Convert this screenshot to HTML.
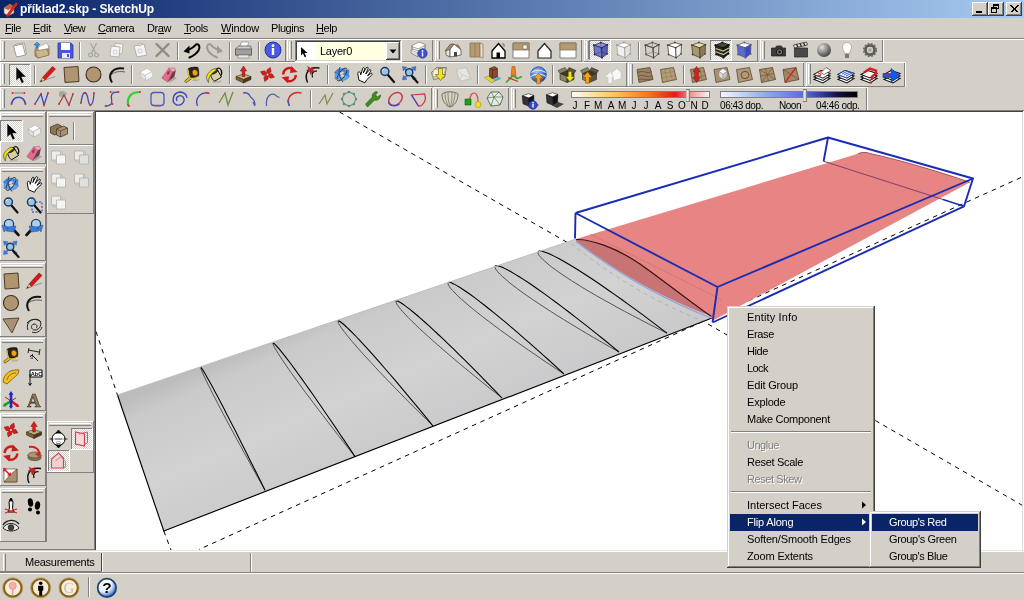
<!DOCTYPE html>
<html><head><meta charset="utf-8"><title>příklad2.skp - SketchUp</title>
<style>
html,body{margin:0;padding:0;background:#D4D0C8;}
#app{position:relative;width:1024px;height:600px;overflow:hidden;background:#D4D0C8;font-family:"Liberation Sans",sans-serif;font-size:11px;}
#app div{position:absolute;}
#app .t{position:absolute;white-space:nowrap;line-height:13px;will-change:transform;}
#app svg{position:absolute;left:0;top:0;}
u{text-decoration:underline;}
</style></head><body><div id="app">
<div style="left:0px;top:0px;width:1024px;height:18px;background:linear-gradient(90deg,#0A246A,#A6CAF0)"></div>
<span class="t" style="left:19.5px;top:3px;font-size:12px;letter-spacing:-0.087px;color:#fff;font-weight:bold;line-height:12px;">příklad2.skp - SketchUp</span>
<div style="left:972px;top:2px;width:16px;height:14px;background:#D4D0C8"></div>
<div style="left:972px;top:2px;width:15px;height:1px;background:#fff"></div>
<div style="left:972px;top:2px;width:1px;height:13px;background:#fff"></div>
<div style="left:972px;top:15px;width:16px;height:1px;background:#404040"></div>
<div style="left:987px;top:2px;width:1px;height:14px;background:#404040"></div>
<div style="left:973px;top:14px;width:14px;height:1px;background:#808080"></div>
<div style="left:986px;top:3px;width:1px;height:12px;background:#808080"></div>
<div style="left:988px;top:2px;width:16px;height:14px;background:#D4D0C8"></div>
<div style="left:988px;top:2px;width:15px;height:1px;background:#fff"></div>
<div style="left:988px;top:2px;width:1px;height:13px;background:#fff"></div>
<div style="left:988px;top:15px;width:16px;height:1px;background:#404040"></div>
<div style="left:1003px;top:2px;width:1px;height:14px;background:#404040"></div>
<div style="left:989px;top:14px;width:14px;height:1px;background:#808080"></div>
<div style="left:1002px;top:3px;width:1px;height:12px;background:#808080"></div>
<div style="left:1006px;top:2px;width:16px;height:14px;background:#D4D0C8"></div>
<div style="left:1006px;top:2px;width:15px;height:1px;background:#fff"></div>
<div style="left:1006px;top:2px;width:1px;height:13px;background:#fff"></div>
<div style="left:1006px;top:15px;width:16px;height:1px;background:#404040"></div>
<div style="left:1021px;top:2px;width:1px;height:14px;background:#404040"></div>
<div style="left:1007px;top:14px;width:14px;height:1px;background:#808080"></div>
<div style="left:1020px;top:3px;width:1px;height:12px;background:#808080"></div>
<div style="left:976px;top:11px;width:6px;height:2px;background:#000"></div>
<div style="left:993px;top:4px;width:6px;height:5px;box-sizing:border-box;border:1px solid #000;border-top:2px solid #000"></div>
<div style="left:991px;top:7px;width:6px;height:6px;box-sizing:border-box;border:1px solid #000;border-top:2px solid #000;background:#D4D0C8"></div>
<span class="t" style="left:5px;top:22px;font-size:11px;letter-spacing:-0.430px;color:#000;">File</span>
<div style="left:5px;top:33px;width:7px;height:1px;background:#000"></div>
<span class="t" style="left:33px;top:22px;font-size:11px;letter-spacing:-0.242px;color:#000;">Edit</span>
<div style="left:33px;top:33px;width:7px;height:1px;background:#000"></div>
<span class="t" style="left:64px;top:22px;font-size:11px;letter-spacing:-0.660px;color:#000;">View</span>
<div style="left:64px;top:33px;width:7px;height:1px;background:#000"></div>
<span class="t" style="left:98px;top:22px;font-size:11px;letter-spacing:-0.521px;color:#000;">Camera</span>
<div style="left:98px;top:33px;width:8px;height:1px;background:#000"></div>
<span class="t" style="left:147px;top:22px;font-size:11px;letter-spacing:-0.414px;color:#000;">Draw</span>
<div style="left:158px;top:33px;width:6px;height:1px;background:#000"></div>
<span class="t" style="left:184px;top:22px;font-size:11px;letter-spacing:-0.338px;color:#000;">Tools</span>
<div style="left:184px;top:33px;width:7px;height:1px;background:#000"></div>
<span class="t" style="left:221px;top:22px;font-size:11px;letter-spacing:-0.188px;color:#000;">Window</span>
<div style="left:221px;top:33px;width:10px;height:1px;background:#000"></div>
<span class="t" style="left:271px;top:22px;font-size:11px;letter-spacing:-0.442px;color:#000;">Plugins</span>
<span class="t" style="left:316px;top:22px;font-size:11px;letter-spacing:-0.406px;color:#000;">Help</span>
<div style="left:316px;top:33px;width:8px;height:1px;background:#000"></div>
<div style="left:0px;top:38px;width:1024px;height:1px;background:#808080"></div>
<div style="left:0px;top:39px;width:1024px;height:1px;background:#fff"></div>
<div style="left:0px;top:110px;width:1024px;height:1px;background:#808080"></div>
<div style="left:0px;top:39px;width:286px;height:1px;background:#fff"></div>
<div style="left:0px;top:39px;width:1px;height:23px;background:#fff"></div>
<div style="left:0px;top:61px;width:287px;height:1px;background:#808080"></div>
<div style="left:285px;top:40px;width:1px;height:22px;background:#808080"></div>
<div style="left:2px;top:41px;width:1px;height:18px;background:#fff"></div>
<div style="left:3px;top:41px;width:1px;height:18px;background:#D4D0C8"></div>
<div style="left:4px;top:41px;width:1px;height:18px;background:#808080"></div>
<div style="left:287px;top:39px;width:146px;height:1px;background:#fff"></div>
<div style="left:287px;top:39px;width:1px;height:23px;background:#fff"></div>
<div style="left:287px;top:61px;width:147px;height:1px;background:#808080"></div>
<div style="left:432px;top:40px;width:1px;height:22px;background:#808080"></div>
<div style="left:289px;top:41px;width:1px;height:18px;background:#fff"></div>
<div style="left:290px;top:41px;width:1px;height:18px;background:#D4D0C8"></div>
<div style="left:291px;top:41px;width:1px;height:18px;background:#808080"></div>
<div style="left:435px;top:39px;width:147px;height:1px;background:#fff"></div>
<div style="left:435px;top:39px;width:1px;height:23px;background:#fff"></div>
<div style="left:435px;top:61px;width:148px;height:1px;background:#808080"></div>
<div style="left:581px;top:40px;width:1px;height:22px;background:#808080"></div>
<div style="left:437px;top:41px;width:1px;height:18px;background:#fff"></div>
<div style="left:438px;top:41px;width:1px;height:18px;background:#D4D0C8"></div>
<div style="left:439px;top:41px;width:1px;height:18px;background:#808080"></div>
<div style="left:584px;top:39px;width:174px;height:1px;background:#fff"></div>
<div style="left:584px;top:39px;width:1px;height:23px;background:#fff"></div>
<div style="left:584px;top:61px;width:175px;height:1px;background:#808080"></div>
<div style="left:757px;top:40px;width:1px;height:22px;background:#808080"></div>
<div style="left:586px;top:41px;width:1px;height:18px;background:#fff"></div>
<div style="left:587px;top:41px;width:1px;height:18px;background:#D4D0C8"></div>
<div style="left:588px;top:41px;width:1px;height:18px;background:#808080"></div>
<div style="left:760px;top:39px;width:123px;height:1px;background:#fff"></div>
<div style="left:760px;top:39px;width:1px;height:23px;background:#fff"></div>
<div style="left:760px;top:61px;width:124px;height:1px;background:#808080"></div>
<div style="left:882px;top:40px;width:1px;height:22px;background:#808080"></div>
<div style="left:762px;top:41px;width:1px;height:18px;background:#fff"></div>
<div style="left:763px;top:41px;width:1px;height:18px;background:#D4D0C8"></div>
<div style="left:764px;top:41px;width:1px;height:18px;background:#808080"></div>
<div style="left:0px;top:62px;width:627px;height:1px;background:#fff"></div>
<div style="left:0px;top:62px;width:1px;height:25px;background:#fff"></div>
<div style="left:0px;top:86px;width:628px;height:1px;background:#808080"></div>
<div style="left:626px;top:63px;width:1px;height:24px;background:#808080"></div>
<div style="left:2px;top:64px;width:1px;height:20px;background:#fff"></div>
<div style="left:3px;top:64px;width:1px;height:20px;background:#D4D0C8"></div>
<div style="left:4px;top:64px;width:1px;height:20px;background:#808080"></div>
<div style="left:628px;top:62px;width:176px;height:1px;background:#fff"></div>
<div style="left:628px;top:62px;width:1px;height:25px;background:#fff"></div>
<div style="left:628px;top:86px;width:177px;height:1px;background:#808080"></div>
<div style="left:803px;top:63px;width:1px;height:24px;background:#808080"></div>
<div style="left:630px;top:64px;width:1px;height:20px;background:#fff"></div>
<div style="left:631px;top:64px;width:1px;height:20px;background:#D4D0C8"></div>
<div style="left:632px;top:64px;width:1px;height:20px;background:#808080"></div>
<div style="left:806px;top:62px;width:99px;height:1px;background:#fff"></div>
<div style="left:806px;top:62px;width:1px;height:25px;background:#fff"></div>
<div style="left:806px;top:86px;width:100px;height:1px;background:#808080"></div>
<div style="left:904px;top:63px;width:1px;height:24px;background:#808080"></div>
<div style="left:808px;top:64px;width:1px;height:20px;background:#fff"></div>
<div style="left:809px;top:64px;width:1px;height:20px;background:#D4D0C8"></div>
<div style="left:810px;top:64px;width:1px;height:20px;background:#808080"></div>
<div style="left:0px;top:87px;width:432px;height:1px;background:#fff"></div>
<div style="left:0px;top:87px;width:1px;height:24px;background:#fff"></div>
<div style="left:0px;top:110px;width:433px;height:1px;background:#808080"></div>
<div style="left:431px;top:88px;width:1px;height:23px;background:#808080"></div>
<div style="left:2px;top:89px;width:1px;height:19px;background:#fff"></div>
<div style="left:3px;top:89px;width:1px;height:19px;background:#D4D0C8"></div>
<div style="left:4px;top:89px;width:1px;height:19px;background:#808080"></div>
<div style="left:433px;top:87px;width:76px;height:1px;background:#fff"></div>
<div style="left:433px;top:87px;width:1px;height:24px;background:#fff"></div>
<div style="left:433px;top:110px;width:77px;height:1px;background:#808080"></div>
<div style="left:508px;top:88px;width:1px;height:23px;background:#808080"></div>
<div style="left:435px;top:89px;width:1px;height:19px;background:#fff"></div>
<div style="left:436px;top:89px;width:1px;height:19px;background:#D4D0C8"></div>
<div style="left:437px;top:89px;width:1px;height:19px;background:#808080"></div>
<div style="left:511px;top:87px;width:356px;height:1px;background:#fff"></div>
<div style="left:511px;top:87px;width:1px;height:24px;background:#fff"></div>
<div style="left:511px;top:110px;width:357px;height:1px;background:#808080"></div>
<div style="left:866px;top:88px;width:1px;height:23px;background:#808080"></div>
<div style="left:513px;top:89px;width:1px;height:19px;background:#fff"></div>
<div style="left:514px;top:89px;width:1px;height:19px;background:#D4D0C8"></div>
<div style="left:515px;top:89px;width:1px;height:19px;background:#808080"></div>
<div style="left:883px;top:39px;width:1px;height:23px;background:#fff"></div>
<div style="left:905px;top:62px;width:1px;height:25px;background:#fff"></div>
<div style="left:867px;top:87px;width:1px;height:23px;background:#fff"></div>
<div style="left:883px;top:62px;width:22px;height:1px;background:#fff"></div>
<div style="left:0px;top:110px;width:1024px;height:1px;background:#808080"></div>
<div style="left:79px;top:42px;width:1px;height:18px;background:#808080"></div>
<div style="left:80px;top:42px;width:1px;height:18px;background:#fff"></div>
<div style="left:177px;top:42px;width:1px;height:18px;background:#808080"></div>
<div style="left:178px;top:42px;width:1px;height:18px;background:#fff"></div>
<div style="left:229px;top:42px;width:1px;height:18px;background:#808080"></div>
<div style="left:230px;top:42px;width:1px;height:18px;background:#fff"></div>
<div style="left:258px;top:42px;width:1px;height:18px;background:#808080"></div>
<div style="left:259px;top:42px;width:1px;height:18px;background:#fff"></div>
<div style="left:638px;top:42px;width:1px;height:18px;background:#808080"></div>
<div style="left:639px;top:42px;width:1px;height:18px;background:#fff"></div>
<div style="left:34px;top:65px;width:1px;height:19px;background:#808080"></div>
<div style="left:35px;top:65px;width:1px;height:19px;background:#fff"></div>
<div style="left:131px;top:65px;width:1px;height:19px;background:#808080"></div>
<div style="left:132px;top:65px;width:1px;height:19px;background:#fff"></div>
<div style="left:229px;top:65px;width:1px;height:19px;background:#808080"></div>
<div style="left:230px;top:65px;width:1px;height:19px;background:#fff"></div>
<div style="left:327px;top:65px;width:1px;height:19px;background:#808080"></div>
<div style="left:328px;top:65px;width:1px;height:19px;background:#fff"></div>
<div style="left:425px;top:65px;width:1px;height:19px;background:#808080"></div>
<div style="left:426px;top:65px;width:1px;height:19px;background:#fff"></div>
<div style="left:477px;top:65px;width:1px;height:19px;background:#808080"></div>
<div style="left:478px;top:65px;width:1px;height:19px;background:#fff"></div>
<div style="left:552px;top:65px;width:1px;height:19px;background:#808080"></div>
<div style="left:553px;top:65px;width:1px;height:19px;background:#fff"></div>
<div style="left:683px;top:65px;width:1px;height:19px;background:#808080"></div>
<div style="left:684px;top:65px;width:1px;height:19px;background:#fff"></div>
<div style="left:310px;top:90px;width:1px;height:18px;background:#808080"></div>
<div style="left:311px;top:90px;width:1px;height:18px;background:#fff"></div>
<div style="left:9px;top:64px;width:22px;height:22px;background-color:#D4D0C8;background-image:linear-gradient(45deg,#fff 25%,transparent 25%,transparent 75%,#fff 75%),linear-gradient(45deg,#fff 25%,transparent 25%,transparent 75%,#fff 75%);background-size:2px 2px;background-position:0 0,1px 1px"></div>
<div style="left:9px;top:64px;width:22px;height:1px;background:#808080"></div>
<div style="left:9px;top:64px;width:1px;height:22px;background:#808080"></div>
<div style="left:9px;top:85px;width:22px;height:1px;background:#fff"></div>
<div style="left:30px;top:64px;width:1px;height:22px;background:#fff"></div>
<div style="left:589px;top:40px;width:22px;height:21px;background-color:#D4D0C8;background-image:linear-gradient(45deg,#fff 25%,transparent 25%,transparent 75%,#fff 75%),linear-gradient(45deg,#fff 25%,transparent 25%,transparent 75%,#fff 75%);background-size:2px 2px;background-position:0 0,1px 1px"></div>
<div style="left:589px;top:40px;width:22px;height:1px;background:#808080"></div>
<div style="left:589px;top:40px;width:1px;height:21px;background:#808080"></div>
<div style="left:589px;top:60px;width:22px;height:1px;background:#fff"></div>
<div style="left:610px;top:40px;width:1px;height:21px;background:#fff"></div>
<div style="left:710px;top:40px;width:22px;height:21px;background-color:#D4D0C8;background-image:linear-gradient(45deg,#fff 25%,transparent 25%,transparent 75%,#fff 75%),linear-gradient(45deg,#fff 25%,transparent 25%,transparent 75%,#fff 75%);background-size:2px 2px;background-position:0 0,1px 1px"></div>
<div style="left:710px;top:40px;width:22px;height:1px;background:#808080"></div>
<div style="left:710px;top:40px;width:1px;height:21px;background:#808080"></div>
<div style="left:710px;top:60px;width:22px;height:1px;background:#fff"></div>
<div style="left:731px;top:40px;width:1px;height:21px;background:#fff"></div>
<div style="left:295px;top:40px;width:107px;height:22px;background:#fff"></div>
<div style="left:295px;top:40px;width:107px;height:1px;background:#808080"></div>
<div style="left:295px;top:40px;width:1px;height:22px;background:#808080"></div>
<div style="left:295px;top:61px;width:107px;height:1px;background:#fff"></div>
<div style="left:401px;top:40px;width:1px;height:22px;background:#fff"></div>
<div style="left:296px;top:41px;width:105px;height:1px;background:#404040"></div>
<div style="left:296px;top:41px;width:1px;height:20px;background:#404040"></div>
<div style="left:296px;top:60px;width:105px;height:1px;background:#D4D0C8"></div>
<div style="left:400px;top:41px;width:1px;height:20px;background:#D4D0C8"></div>
<div style="left:316px;top:42px;width:70px;height:18px;background:#FFFFE1"></div>
<span class="t" style="left:319.5px;top:45px;font-size:11px;letter-spacing:-0.276px;color:#000;">Layer0</span>
<div style="left:386px;top:42px;width:14px;height:18px;background:#D4D0C8"></div>
<div style="left:386px;top:42px;width:13px;height:1px;background:#fff"></div>
<div style="left:386px;top:42px;width:1px;height:17px;background:#fff"></div>
<div style="left:386px;top:59px;width:14px;height:1px;background:#404040"></div>
<div style="left:399px;top:42px;width:1px;height:18px;background:#404040"></div>
<div style="left:387px;top:58px;width:12px;height:1px;background:#808080"></div>
<div style="left:398px;top:43px;width:1px;height:16px;background:#808080"></div>
<div style="left:96px;top:112px;width:926px;height:438px;background:#fff"></div>
<div style="left:95px;top:111px;width:928px;height:1px;background:#404040"></div>
<div style="left:95px;top:111px;width:1px;height:439px;background:#404040"></div>
<div style="left:1022px;top:112px;width:1px;height:438px;background:#E0DED8"></div>
<div style="left:1023px;top:111px;width:1px;height:440px;background:#fff"></div>
<div style="left:96px;top:550px;width:928px;height:1px;background:#E8E6E0"></div>
<div style="left:46px;top:111px;width:1px;height:431px;background:#808080"></div>
<div style="left:0px;top:112px;width:46px;height:1px;background:#fff"></div>
<div style="left:0px;top:112px;width:1px;height:52px;background:#fff"></div>
<div style="left:0px;top:163px;width:46px;height:1px;background:#808080"></div>
<div style="left:45px;top:112px;width:1px;height:52px;background:#808080"></div>
<div style="left:2px;top:114px;width:41px;height:1px;background:#fff"></div>
<div style="left:2px;top:115px;width:41px;height:1px;background:#D4D0C8"></div>
<div style="left:2px;top:116px;width:41px;height:1px;background:#808080"></div>
<div style="left:0px;top:167px;width:46px;height:1px;background:#fff"></div>
<div style="left:0px;top:167px;width:1px;height:94px;background:#fff"></div>
<div style="left:0px;top:260px;width:46px;height:1px;background:#808080"></div>
<div style="left:45px;top:167px;width:1px;height:94px;background:#808080"></div>
<div style="left:2px;top:169px;width:41px;height:1px;background:#fff"></div>
<div style="left:2px;top:170px;width:41px;height:1px;background:#D4D0C8"></div>
<div style="left:2px;top:171px;width:41px;height:1px;background:#808080"></div>
<div style="left:0px;top:263px;width:46px;height:1px;background:#fff"></div>
<div style="left:0px;top:263px;width:1px;height:74px;background:#fff"></div>
<div style="left:0px;top:336px;width:46px;height:1px;background:#808080"></div>
<div style="left:45px;top:263px;width:1px;height:74px;background:#808080"></div>
<div style="left:2px;top:265px;width:41px;height:1px;background:#fff"></div>
<div style="left:2px;top:266px;width:41px;height:1px;background:#D4D0C8"></div>
<div style="left:2px;top:267px;width:41px;height:1px;background:#808080"></div>
<div style="left:0px;top:338px;width:46px;height:1px;background:#fff"></div>
<div style="left:0px;top:338px;width:1px;height:73px;background:#fff"></div>
<div style="left:0px;top:410px;width:46px;height:1px;background:#808080"></div>
<div style="left:45px;top:338px;width:1px;height:73px;background:#808080"></div>
<div style="left:2px;top:340px;width:41px;height:1px;background:#fff"></div>
<div style="left:2px;top:341px;width:41px;height:1px;background:#D4D0C8"></div>
<div style="left:2px;top:342px;width:41px;height:1px;background:#808080"></div>
<div style="left:0px;top:413px;width:46px;height:1px;background:#fff"></div>
<div style="left:0px;top:413px;width:1px;height:73px;background:#fff"></div>
<div style="left:0px;top:485px;width:46px;height:1px;background:#808080"></div>
<div style="left:45px;top:413px;width:1px;height:73px;background:#808080"></div>
<div style="left:2px;top:415px;width:41px;height:1px;background:#fff"></div>
<div style="left:2px;top:416px;width:41px;height:1px;background:#D4D0C8"></div>
<div style="left:2px;top:417px;width:41px;height:1px;background:#808080"></div>
<div style="left:0px;top:488px;width:46px;height:1px;background:#fff"></div>
<div style="left:0px;top:488px;width:1px;height:54px;background:#fff"></div>
<div style="left:0px;top:541px;width:46px;height:1px;background:#808080"></div>
<div style="left:45px;top:488px;width:1px;height:54px;background:#808080"></div>
<div style="left:2px;top:490px;width:41px;height:1px;background:#fff"></div>
<div style="left:2px;top:491px;width:41px;height:1px;background:#D4D0C8"></div>
<div style="left:2px;top:492px;width:41px;height:1px;background:#808080"></div>
<div style="left:47px;top:112px;width:47px;height:1px;background:#fff"></div>
<div style="left:47px;top:112px;width:1px;height:102px;background:#fff"></div>
<div style="left:47px;top:213px;width:47px;height:1px;background:#808080"></div>
<div style="left:93px;top:112px;width:1px;height:102px;background:#808080"></div>
<div style="left:49px;top:114px;width:42px;height:1px;background:#fff"></div>
<div style="left:49px;top:115px;width:42px;height:1px;background:#D4D0C8"></div>
<div style="left:49px;top:116px;width:42px;height:1px;background:#808080"></div>
<div style="left:47px;top:421px;width:47px;height:1px;background:#fff"></div>
<div style="left:47px;top:421px;width:1px;height:52px;background:#fff"></div>
<div style="left:47px;top:472px;width:47px;height:1px;background:#808080"></div>
<div style="left:93px;top:421px;width:1px;height:52px;background:#808080"></div>
<div style="left:49px;top:423px;width:42px;height:1px;background:#fff"></div>
<div style="left:49px;top:424px;width:42px;height:1px;background:#D4D0C8"></div>
<div style="left:49px;top:425px;width:42px;height:1px;background:#808080"></div>
<div style="left:94px;top:111px;width:1px;height:439px;background:#808080"></div>
<div style="left:0px;top:549px;width:95px;height:1px;background:#808080"></div>
<div style="left:73px;top:122px;width:1px;height:18px;background:#808080"></div>
<div style="left:74px;top:122px;width:1px;height:18px;background:#fff"></div>
<div style="left:49px;top:144px;width:44px;height:1px;background:#808080"></div>
<div style="left:49px;top:145px;width:44px;height:1px;background:#fff"></div>
<div style="left:0px;top:120px;width:23px;height:22px;background-color:#D4D0C8;background-image:linear-gradient(45deg,#fff 25%,transparent 25%,transparent 75%,#fff 75%),linear-gradient(45deg,#fff 25%,transparent 25%,transparent 75%,#fff 75%);background-size:2px 2px;background-position:0 0,1px 1px"></div>
<div style="left:0px;top:120px;width:23px;height:1px;background:#808080"></div>
<div style="left:0px;top:120px;width:1px;height:22px;background:#808080"></div>
<div style="left:0px;top:141px;width:23px;height:1px;background:#fff"></div>
<div style="left:22px;top:120px;width:1px;height:22px;background:#fff"></div>
<div style="left:71px;top:428px;width:22px;height:22px;background-color:#D4D0C8;background-image:linear-gradient(45deg,#fff 25%,transparent 25%,transparent 75%,#fff 75%),linear-gradient(45deg,#fff 25%,transparent 25%,transparent 75%,#fff 75%);background-size:2px 2px;background-position:0 0,1px 1px"></div>
<div style="left:71px;top:428px;width:22px;height:1px;background:#808080"></div>
<div style="left:71px;top:428px;width:1px;height:22px;background:#808080"></div>
<div style="left:71px;top:449px;width:22px;height:1px;background:#fff"></div>
<div style="left:92px;top:428px;width:1px;height:22px;background:#fff"></div>
<div style="left:48px;top:450px;width:22px;height:22px;background-color:#D4D0C8;background-image:linear-gradient(45deg,#fff 25%,transparent 25%,transparent 75%,#fff 75%),linear-gradient(45deg,#fff 25%,transparent 25%,transparent 75%,#fff 75%);background-size:2px 2px;background-position:0 0,1px 1px"></div>
<div style="left:48px;top:450px;width:22px;height:1px;background:#808080"></div>
<div style="left:48px;top:450px;width:1px;height:22px;background:#808080"></div>
<div style="left:48px;top:471px;width:22px;height:1px;background:#fff"></div>
<div style="left:69px;top:450px;width:1px;height:22px;background:#fff"></div>
<div style="left:0px;top:551px;width:1024px;height:1px;background:#fff"></div>
<div style="left:3px;top:554px;width:1px;height:17px;background:#fff"></div>
<div style="left:4px;top:554px;width:1px;height:17px;background:#D4D0C8"></div>
<div style="left:5px;top:554px;width:1px;height:17px;background:#808080"></div>
<div style="left:101px;top:553px;width:1px;height:19px;background:#404040"></div>
<div style="left:0px;top:571px;width:102px;height:1px;background:#808080"></div>
<span class="t" style="left:25px;top:556px;font-size:11px;letter-spacing:-0.273px;color:#000;">Measurements</span>
<div style="left:102px;top:553px;width:1px;height:19px;background:#fff"></div>
<div style="left:250px;top:553px;width:1px;height:19px;background:#808080"></div>
<div style="left:251px;top:553px;width:1px;height:19px;background:#fff"></div>
<div style="left:0px;top:572px;width:1024px;height:1px;background:#808080"></div>
<div style="left:0px;top:573px;width:1024px;height:1px;background:#fff"></div>
<div style="left:88px;top:577px;width:1px;height:20px;background:#808080"></div>
<div style="left:89px;top:577px;width:1px;height:20px;background:#fff"></div>
<span class="t" style="left:571px;top:100px;font-size:10px;width:8px;text-align:center;line-height:11px">J</span>
<span class="t" style="left:583px;top:100px;font-size:10px;width:8px;text-align:center;line-height:11px">F</span>
<span class="t" style="left:594px;top:100px;font-size:10px;width:8px;text-align:center;line-height:11px">M</span>
<span class="t" style="left:607px;top:100px;font-size:10px;width:8px;text-align:center;line-height:11px">A</span>
<span class="t" style="left:618px;top:100px;font-size:10px;width:8px;text-align:center;line-height:11px">M</span>
<span class="t" style="left:630px;top:100px;font-size:10px;width:8px;text-align:center;line-height:11px">J</span>
<span class="t" style="left:642px;top:100px;font-size:10px;width:8px;text-align:center;line-height:11px">J</span>
<span class="t" style="left:654px;top:100px;font-size:10px;width:8px;text-align:center;line-height:11px">A</span>
<span class="t" style="left:666px;top:100px;font-size:10px;width:8px;text-align:center;line-height:11px">S</span>
<span class="t" style="left:678px;top:100px;font-size:10px;width:8px;text-align:center;line-height:11px">O</span>
<span class="t" style="left:690px;top:100px;font-size:10px;width:8px;text-align:center;line-height:11px">N</span>
<span class="t" style="left:701px;top:100px;font-size:10px;width:8px;text-align:center;line-height:11px">D</span>
<span class="t" style="left:719.5px;top:100px;font-size:10px;letter-spacing:-0.428px;color:#000;line-height:11px">06:43 dop.</span>
<span class="t" style="left:779px;top:100px;font-size:10px;letter-spacing:-0.477px;color:#000;line-height:11px">Noon</span>
<span class="t" style="left:815.5px;top:100px;font-size:10px;letter-spacing:-0.378px;color:#000;line-height:11px">04:46 odp.</span>
<svg width="1024" height="600" viewBox="0 0 1024 600">
<defs><clipPath id="vp"><rect x="96" y="112" width="926" height="438"/></clipPath><linearGradient id="wing" gradientUnits="userSpaceOnUse" x1="330" y1="310" x2="400" y2="470"><stop offset="0" stop-color="#BCBCBD"/><stop offset=".12" stop-color="#CACACB"/><stop offset=".5" stop-color="#D2D2D3"/><stop offset="1" stop-color="#C8C8CA"/></linearGradient></defs>
<g clip-path="url(#vp)">
<path d="M339.5 112 L580 249.7" stroke="#000" stroke-width="1" stroke-dasharray="4.6 4.6" fill="none"/>
<path d="M708 324 L1024 506.3" stroke="#000" stroke-width="1" stroke-dasharray="4.6 4.6" fill="none"/>
<path d="M1021 177.5 L199 549.5" stroke="#000" stroke-width="1" stroke-dasharray="4.6 4.6" fill="none"/>
<path d="M96 331.5 L117.5 395 M163.8 531 L171 550" stroke="#000" stroke-width="1" stroke-dasharray="4.6 4.6" fill="none"/>
<path d="M117.5 395 L576 239 L712 318 L163.8 531Z" fill="url(#wing)"/>
<path d="M571 243.5 Q633 293.5 704 321.5" stroke="#ABABAB" stroke-width=".9" stroke-dasharray="4 4" fill="none"/>
<path d="M200.8 367.5 L200.9 368.4 L201.4 370.1 L202.3 372.3 L203.5 375.0 L205.0 378.0 L206.6 381.5 L208.5 385.3 L210.5 389.4 L212.7 393.8 L215.2 398.5 L217.8 403.5 L220.5 408.8 L223.4 414.3 L226.5 420.1 L229.7 426.1 L233.1 432.3 L236.6 438.8 L240.3 445.5 L244.1 452.5 L248.0 459.6 L252.0 467.0 L256.2 474.6 L260.5 482.3 L265.0 490.3" stroke="#333" stroke-width=".8" fill="none"/>
<path d="M200.8 367.5 L201.5 368.1 L202.5 369.5 L203.8 371.6 L205.3 374.1 L206.9 377.0 L208.8 380.3 L210.9 384.0 L213.1 388.1 L215.4 392.4 L217.9 397.1 L220.5 402.1 L223.3 407.3 L226.1 412.9 L229.1 418.7 L232.2 424.8 L235.5 431.1 L238.8 437.7 L242.2 444.5 L245.8 451.6 L249.4 458.9 L253.2 466.4 L257.0 474.1 L261.0 482.1 L265.0 490.3" stroke="#000" stroke-width="1.05" fill="none" stroke-linejoin="round"/>
<path d="M273.0 343.0 L273.0 344.1 L273.7 345.7 L274.8 347.9 L276.3 350.4 L278.1 353.4 L280.2 356.6 L282.5 360.2 L285.1 364.0 L288.0 368.2 L291.0 372.5 L294.4 377.2 L297.9 382.0 L301.6 387.1 L305.5 392.5 L309.7 398.0 L314.0 403.7 L318.5 409.7 L323.2 415.8 L328.1 422.2 L333.1 428.7 L338.3 435.4 L343.7 442.3 L349.3 449.4 L355.0 456.6" stroke="#333" stroke-width=".8" fill="none"/>
<path d="M273.0 343.0 L273.9 343.4 L275.3 344.6 L276.9 346.4 L278.9 348.6 L281.0 351.2 L283.5 354.3 L286.1 357.6 L288.9 361.3 L291.9 365.3 L295.1 369.6 L298.4 374.2 L302.0 379.1 L305.6 384.2 L309.4 389.6 L313.4 395.3 L317.5 401.2 L321.7 407.3 L326.1 413.7 L330.6 420.3 L335.3 427.1 L340.0 434.2 L344.9 441.4 L349.9 448.9 L355.0 456.6" stroke="#000" stroke-width="1.05" fill="none" stroke-linejoin="round"/>
<path d="M338.0 320.8 L338.0 322.0 L338.8 323.7 L340.0 325.8 L341.7 328.3 L343.8 331.1 L346.2 334.2 L348.9 337.6 L351.9 341.2 L355.2 345.0 L358.7 349.1 L362.6 353.4 L366.7 357.9 L371.0 362.6 L375.5 367.5 L380.3 372.6 L385.4 377.9 L390.6 383.3 L396.0 388.9 L401.7 394.7 L407.5 400.7 L413.6 406.8 L419.9 413.0 L426.3 419.4 L433.0 426.0" stroke="#333" stroke-width=".8" fill="none"/>
<path d="M338.0 320.8 L339.1 321.0 L340.7 322.0 L342.6 323.5 L344.9 325.5 L347.4 327.8 L350.2 330.5 L353.3 333.6 L356.6 337.0 L360.0 340.7 L363.7 344.6 L367.6 348.9 L371.7 353.4 L375.9 358.2 L380.3 363.2 L384.9 368.5 L389.7 374.0 L394.6 379.7 L399.6 385.7 L404.8 391.9 L410.2 398.3 L415.7 404.9 L421.3 411.7 L427.1 418.7 L433.0 426.0" stroke="#000" stroke-width="1.05" fill="none" stroke-linejoin="round"/>
<path d="M396.0 301.0 L396.0 302.3 L396.8 304.1 L398.3 306.2 L400.1 308.6 L402.4 311.3 L405.1 314.2 L408.1 317.4 L411.5 320.8 L415.2 324.4 L419.1 328.2 L423.4 332.1 L428.0 336.3 L432.8 340.6 L437.9 345.1 L443.2 349.7 L448.8 354.5 L454.7 359.5 L460.7 364.6 L467.0 369.8 L473.6 375.2 L480.4 380.7 L487.3 386.4 L494.6 392.1 L502.0 398.0" stroke="#333" stroke-width=".8" fill="none"/>
<path d="M396.0 301.0 L397.3 300.9 L399.0 301.7 L401.2 303.0 L403.7 304.7 L406.5 306.8 L409.7 309.2 L413.1 312.0 L416.7 315.0 L420.6 318.4 L424.7 322.0 L429.1 325.9 L433.6 330.1 L438.3 334.5 L443.3 339.2 L448.4 344.1 L453.7 349.2 L459.1 354.6 L464.8 360.2 L470.6 365.9 L476.6 371.9 L482.7 378.1 L489.0 384.6 L495.4 391.2 L502.0 398.0" stroke="#000" stroke-width="1.05" fill="none" stroke-linejoin="round"/>
<path d="M448.0 282.5 L448.0 284.0 L448.9 285.8 L450.4 288.0 L452.5 290.4 L455.0 293.0 L457.9 295.9 L461.2 299.0 L464.9 302.2 L468.9 305.7 L473.3 309.3 L477.9 313.0 L482.9 316.9 L488.2 321.0 L493.8 325.2 L499.6 329.5 L505.8 334.0 L512.1 338.6 L518.8 343.3 L525.7 348.1 L532.9 353.1 L540.3 358.2 L547.9 363.3 L555.8 368.6 L564.0 374.0" stroke="#333" stroke-width=".8" fill="none"/>
<path d="M448.0 282.5 L449.4 282.2 L451.3 282.8 L453.7 283.9 L456.4 285.4 L459.6 287.2 L463.0 289.5 L466.7 292.0 L470.7 294.8 L475.0 297.9 L479.5 301.4 L484.2 305.0 L489.2 309.0 L494.4 313.1 L499.8 317.6 L505.4 322.2 L511.2 327.1 L517.1 332.2 L523.3 337.6 L529.7 343.1 L536.2 348.9 L542.9 354.9 L549.8 361.0 L556.8 367.4 L564.0 374.0" stroke="#000" stroke-width="1.05" fill="none" stroke-linejoin="round"/>
<path d="M495.0 266.0 L495.0 267.7 L496.0 269.5 L497.7 271.7 L499.9 274.1 L502.5 276.6 L505.7 279.4 L509.2 282.4 L513.1 285.5 L517.4 288.8 L522.1 292.2 L527.1 295.7 L532.4 299.4 L538.1 303.2 L544.0 307.1 L550.3 311.1 L556.8 315.3 L563.6 319.5 L570.8 323.9 L578.1 328.3 L585.8 332.9 L593.7 337.6 L601.9 342.3 L610.3 347.1 L619.0 352.0" stroke="#333" stroke-width=".8" fill="none"/>
<path d="M495.0 266.0 L496.5 265.5 L498.5 265.9 L501.0 266.8 L504.0 268.1 L507.3 269.8 L511.0 271.8 L514.9 274.1 L519.2 276.7 L523.8 279.6 L528.6 282.8 L533.7 286.3 L539.0 290.0 L544.5 293.9 L550.3 298.1 L556.2 302.5 L562.4 307.2 L568.8 312.0 L575.4 317.1 L582.2 322.4 L589.2 327.9 L596.4 333.6 L603.8 339.5 L611.3 345.7 L619.0 352.0" stroke="#000" stroke-width="1.05" fill="none" stroke-linejoin="round"/>
<path d="M538.0 251.5 L538.0 253.3 L539.0 255.2 L540.8 257.3 L543.1 259.7 L545.9 262.2 L549.1 265.0 L552.8 267.8 L556.9 270.8 L561.4 274.0 L566.2 277.2 L571.4 280.6 L577.0 284.1 L582.8 287.7 L589.0 291.4 L595.5 295.2 L602.4 299.1 L609.5 303.0 L616.8 307.1 L624.5 311.3 L632.5 315.5 L640.7 319.8 L649.2 324.2 L658.0 328.7 L667.0 333.2" stroke="#333" stroke-width=".8" fill="none"/>
<path d="M538.0 251.5 L539.5 250.9 L541.6 251.1 L544.2 251.9 L547.3 253.0 L550.8 254.6 L554.6 256.4 L558.7 258.5 L563.2 261.0 L567.9 263.7 L572.9 266.7 L578.2 270.0 L583.7 273.5 L589.5 277.3 L595.5 281.3 L601.7 285.5 L608.1 290.0 L614.8 294.6 L621.7 299.5 L628.7 304.6 L636.0 309.9 L643.5 315.4 L651.1 321.1 L659.0 327.1 L667.0 333.2" stroke="#000" stroke-width="1.05" fill="none" stroke-linejoin="round"/>
<path d="M117.5 395 L163.8 531 L712 318" stroke="#000" stroke-width="1.15" fill="none"/>
<path d="M117.5 395 L576 239" stroke="#BDBDBD" stroke-width="1" fill="none"/>
<path d="M576 239 L858 153.7 C862 152 866 152 870 153.5 C900 160 940 172 970 182.3 L714 320 L711 316 C700 309 668 284 640 264 C615 247 590 239 576 239Z" fill="#E78585"/>
<path d="M576 239.5 C590 239 615 247 640 264 C668 284 700 309 711.5 316.5 Q638.3 288.8 576 241Z" fill="#C97474"/>
<path d="M576 239.5 C590 239 615 247 640 264 C668 284 700 309 711.5 316.5" stroke="#3A1010" stroke-width="1.2" fill="none"/>
<path d="M576 241.5 Q638.3 289.6 711 318" stroke="#8FA0E0" stroke-width="1.2" fill="none"/>
<path d="M858 153.7 C862 152 866 152 870 153.5 C900 160 940 172 970 182.3" stroke="#A85068" stroke-width="1" fill="none"/>
<path d="M823.6 161.3 L943 199.5" stroke="#8C4468" stroke-width="1.2" fill="none"/>
<path d="M943 199.5 L964 206.3" stroke="#1A2CB4" stroke-width="1.5" fill="none"/>
<path d="M590 234 L722 300" stroke="#C86C74" stroke-width="1" fill="none" opacity=".6"/>
<path d="M575.5 213 L575 238.5 M575.5 213 L717.5 287 L712.5 322.5 M575.5 213 L828 137.5 L973 178.5 L717.5 287 M828 137.5 L823.6 161.3 M973 178.5 L964 206.3 L712.5 322.5" stroke="#1A2CB4" stroke-width="1.9" fill="none" stroke-linejoin="round"/>
<path d="M575 238.5 L712.5 322.5" stroke="#1A2CB4" stroke-width="1" fill="none" opacity=".0"/>
</g>
<path d="M1010.5 5.5 l7 7 M1011.5 5.5 l7 7 M1017.5 5.5 l-7 7 M1018.5 5.5 l-7 7" stroke="#000" stroke-width="1" fill="none" shape-rendering="crispEdges"/>
<path d="M389.5 49.5 h7 l-3.5 4z" fill="#000"/>
<path d="M301 47 v8.5 l2 -2 l1.7 3.8 l1.5 -0.7 l-1.7 -3.7 h3z" fill="#000"/>
<g transform="translate(19.5,50)" ><path d="M-4 -6 L5 -7 L7 4 L-2 6Z" fill="#E8E8E8" stroke="#9A9A9A" stroke-width="0.8" /><path d="M-6 -4 L3 -6 L6 5 L-3 7Z" fill="#fff" stroke="#8A8A8A" stroke-width="0.8" /></g>
<g transform="translate(42,51)" ><path d="M-7 -2 L-4 -4 L7 -5 L7 4 L-4 7 L-7 5Z" fill="#B49A72" stroke="#8A7250" stroke-width="0.8" /><path d="M-4 -4 L5 -8 L7 -3 L-3 1Z" fill="#fff" stroke="#999" stroke-width="0.6" /><path d="M-7 0 L5 -2 L7 4 L-4 7 Z" fill="#CDB68E" stroke="#8A7250" stroke-width="0.7" /><path d="M-8 -6 l3 -3 l3 3 l-2 0 l0 3 l-2 0 l0 -3z" fill="#3C96E0" stroke="#1C66B0" stroke-width="0.6" /></g>
<g transform="translate(65,50)" ><path d="M-7 -7 H6 L8 -5 V8 H-7Z" fill="#4858D0" stroke="#2C389C" stroke-width="0.8" /><path d="M-4 -7 H5 V0 H-4Z" fill="#fff" stroke="none" stroke-width="1" /><path d="M-3 3 H5 V8 H-3Z" fill="#E8E8F8" stroke="none" stroke-width="1" /><path d="M2 4 H4 V7 H2Z" fill="#4858D0" stroke="none" stroke-width="1" /></g>
<g transform="translate(93.5,50)" ><path d="M-3 -7 L2 3 M3 -7 L-2 3" fill="none" stroke="#A4A49C" stroke-width="1.2" /><circle cx="-3" cy="5" r="2" fill="none" stroke="#A4A49C" stroke-width="1.2"/><circle cx="3" cy="5" r="2" fill="none" stroke="#A4A49C" stroke-width="1.2"/></g>
<g transform="translate(117,50)" ><path d="M-2 -7 L6 -6 L5 4 L-3 3Z" fill="#F0F0F0" stroke="#AAA" stroke-width="0.8" /><path d="M-6 -4 L3 -3 L2 7 L-7 6Z" fill="#F6F6F6" stroke="#A4A4A4" stroke-width="0.8" /><circle cx="-2" cy="2" r="2" fill="none" stroke="#BBB" stroke-width="0.7"/></g>
<g transform="translate(140,50)" ><path d="M-6 -4 L4 -6 L7 5 L-3 7Z" fill="#F4F4F4" stroke="#A4A4A4" stroke-width="0.8" /><path d="M-2 -6 L1 -7 L2 -5 L-1 -4Z" fill="#DDD" stroke="#A4A4A4" stroke-width="0.6" /><circle cx="0" cy="1" r="2" fill="none" stroke="#BBB" stroke-width="0.7"/></g>
<g transform="translate(162.5,50)" ><path d="M-6 -6 L6 6 M6 -6 L-6 6" fill="none" stroke="#8C8C84" stroke-width="2.4" stroke-linecap="round"/></g>
<g transform="translate(192,50)" ><path d="M-5 0.5 C-1 -1 2 -3 4 -5.5 C7 -7 8.5 -3 6.5 0.5 C4.5 4 1 6 -2.5 7.5" fill="none" stroke="#000" stroke-width="2" stroke-linecap="round"/><path d="M-8.5 1.5 L-2.5 -4.5 L-2.5 3.5Z" fill="#000" stroke="none" stroke-width="1" /></g>
<g transform="translate(214.5,50)" ><g transform="scale(-1,1)"><path d="M-5 0.5 C-1 -1 2 -3 4 -5.5 C7 -7 8.5 -3 6.5 0.5 C4.5 4 1 6 -2.5 7.5" fill="none" stroke="#9A9A96" stroke-width="2" stroke-linecap="round"/><path d="M-8.5 1.5 L-2.5 -4.5 L-2.5 3.5Z" fill="#9A9A96" stroke="none" stroke-width="1" /></g></g>
<g transform="translate(243.5,50)" ><path d="M-4 -3 L-2 -8 L5 -8 L4 -3Z" fill="#fff" stroke="#888" stroke-width="0.7" /><path d="M-8 -1 L-5 -4 L7 -4 L8 -1 L8 5 L-8 5Z" fill="#CCCCCC" stroke="#606060" stroke-width="0.8" /><path d="M-8 -1 H8 V5 H-8Z" fill="#A0A0A0" stroke="#505050" stroke-width="0.7" /><path d="M-5 5 L-6 8 L6 8 L5 5Z" fill="#E8E8E8" stroke="#777" stroke-width="0.6" /></g>
<g transform="translate(273,50)" ><circle cx="0" cy="0" r="8" fill="#4A5AE0" stroke="#2030A8" stroke-width="1"/><path d="M-1.2 -2 H1.2 V5 H-1.2Z" fill="#fff" stroke="none" stroke-width="1" /><circle cx="0" cy="-4.3" r="1.4" fill="#fff" stroke="none" stroke-width="1"/></g>
<g transform="translate(419,50)" ><path d="M-8 0 L0 -4 L7 -1 L-1 3Z" fill="#fff" stroke="#777" stroke-width="0.7" /><path d="M-8 -2 L0 -6 L7 -3 L-1 1Z" fill="#fff" stroke="#777" stroke-width="0.7" /><path d="M-8 -4 L0 -8 L7 -5 L-1 -1Z" fill="#fff" stroke="#777" stroke-width="0.7" /><path d="M-8 0 L-8 3 L-1 7 L-1 3" fill="#ddd" stroke="#777" stroke-width="0.7" /><circle cx="3.5" cy="3.5" r="4.6" fill="#4050D8" stroke="#2030A0" stroke-width="0.8"/><path d="M2.8 2.5 h1.4 v4 h-1.4z" fill="#fff" stroke="none" stroke-width="1" /><circle cx="3.5" cy="1" r="0.9" fill="#fff" stroke="none" stroke-width="1"/></g>
<g transform="translate(453,50)" ><path d="M-7 0 L-2 -5 L5 -5 L8 0 Z" fill="#A48A66" stroke="#5A4A36" stroke-width="0.7" /><path d="M-7 0 L-3 -1 L-3 7 L-7 5Z" fill="#E8E8E8" stroke="#444" stroke-width="0.7" /><path d="M-3 -1 L1 -6 L8 0 L8 5 L-3 7Z" fill="#fff" stroke="#444" stroke-width="0.7" /><path d="M-8 1 L-2.5 -6 L1 -6 L-3 -0.5Z" fill="#A48A66" stroke="#5A4A36" stroke-width="0.6" /><path d="M1 2 h3 v4.5 h-3z" fill="#444" stroke="none" stroke-width="1" /></g>
<g transform="translate(476,50)" ><path d="M-6 -7 H4 V7 H-6Z" fill="#B49A72" stroke="#8A7250" stroke-width="0.8" /><path d="M4 -7 L7 -6 V8 L4 7Z" fill="#E4DCC8" stroke="#8A7250" stroke-width="0.7" /><path d="M-1 -7 V7" fill="none" stroke="#8A7250" stroke-width="0.7" /></g>
<g transform="translate(498.5,50)" ><path d="M-6.5 1 L0 -6.5 L6.5 1 L6.5 8 L-6.5 8Z" fill="#fff" stroke="#000" stroke-width="1.3" /><path d="M-2 2.5 H1.5 V8 H-2Z" fill="#000" stroke="none" stroke-width="1" /><path d="M3.5 -6 h2 v3" fill="none" stroke="#555" stroke-width="0.8" /></g>
<g transform="translate(521,50)" ><path d="M-8 -7 H8 V8 H-8Z" fill="#fff" stroke="#666" stroke-width="0.8" /><path d="M-8 -7 H8 V0 H-8Z" fill="#B49A72" stroke="#8A7250" stroke-width="0.8" /><path d="M2 -5 h4 v4 h-4z" fill="#fff" stroke="#666" stroke-width="0.6" /></g>
<g transform="translate(544.5,50)" ><path d="M-6.5 1 L0 -6.5 L6.5 1 L6.5 8 L-6.5 8Z" fill="#fff" stroke="#222" stroke-width="1.2" /></g>
<g transform="translate(568,50)" ><path d="M-8 -7 H8 V8 H-8Z" fill="#fff" stroke="#666" stroke-width="0.8" /><path d="M-8 -7 H8 V0 H-8Z" fill="#B49A72" stroke="#8A7250" stroke-width="0.8" /></g>
<g transform="translate(600.5,50)" ><path d="M0.3 -7.5 L6.9 -5.3 L1.1 -2.2 L-6.7 -4.8Z" fill="#9498DC" stroke="#282850" stroke-width="0.8" stroke-linejoin="round"/><path d="M-6.7 -4.8 L1.1 -2.2 L1.6 7.7 L-5.9 4.5Z" fill="#7078C8" stroke="#282850" stroke-width="0.8" stroke-linejoin="round"/><path d="M6.9 -5.3 L1.1 -2.2 L1.6 7.7 L6.6 3.8Z" fill="#5860B4" stroke="#282850" stroke-width="0.8" stroke-linejoin="round"/><circle cx="-6.7" cy="-4.8" r="0.9" fill="#282850" stroke="none" stroke-width="1"/><circle cx="0.3" cy="-7.5" r="0.9" fill="#282850" stroke="none" stroke-width="1"/><circle cx="6.9" cy="-5.3" r="0.9" fill="#282850" stroke="none" stroke-width="1"/><circle cx="1.1" cy="-2.2" r="0.9" fill="#282850" stroke="none" stroke-width="1"/><circle cx="-5.9" cy="4.5" r="0.9" fill="#282850" stroke="none" stroke-width="1"/><circle cx="1.6" cy="7.7" r="0.9" fill="#282850" stroke="none" stroke-width="1"/><circle cx="6.6" cy="3.8" r="0.9" fill="#282850" stroke="none" stroke-width="1"/><path d="M-5.9 4.5 L0.6 1.8 L6.6 3.8 M0.6 1.8 L0.3 -7.5" fill="none" stroke="#383870" stroke-width="0.5" /></g>
<g transform="translate(623.5,50)" ><path d="M0.3 -7.5 L6.9 -5.3 L1.1 -2.2 L-6.7 -4.8Z" fill="#fff" stroke="#999" stroke-width="0.7" stroke-linejoin="round"/><path d="M-6.7 -4.8 L1.1 -2.2 L1.6 7.7 L-5.9 4.5Z" fill="#F0F0F0" stroke="#999" stroke-width="0.7" stroke-linejoin="round"/><path d="M6.9 -5.3 L1.1 -2.2 L1.6 7.7 L6.6 3.8Z" fill="#E4E4E4" stroke="#999" stroke-width="0.7" stroke-linejoin="round"/><circle cx="-6.7" cy="-4.8" r="0.9" fill="#999" stroke="none" stroke-width="1"/><circle cx="0.3" cy="-7.5" r="0.9" fill="#999" stroke="none" stroke-width="1"/><circle cx="6.9" cy="-5.3" r="0.9" fill="#999" stroke="none" stroke-width="1"/><circle cx="1.1" cy="-2.2" r="0.9" fill="#999" stroke="none" stroke-width="1"/><circle cx="-5.9" cy="4.5" r="0.9" fill="#999" stroke="none" stroke-width="1"/><circle cx="1.6" cy="7.7" r="0.9" fill="#999" stroke="none" stroke-width="1"/><circle cx="6.6" cy="3.8" r="0.9" fill="#999" stroke="none" stroke-width="1"/></g>
<g transform="translate(652,50)" ><path d="M0.3 -7.5 L6.9 -5.3 L1.1 -2.2 L-6.7 -4.8Z" fill="none" stroke="#444" stroke-width="0.8" stroke-linejoin="round"/><path d="M-6.7 -4.8 L1.1 -2.2 L1.6 7.7 L-5.9 4.5Z" fill="none" stroke="#444" stroke-width="0.8" stroke-linejoin="round"/><path d="M6.9 -5.3 L1.1 -2.2 L1.6 7.7 L6.6 3.8Z" fill="none" stroke="#444" stroke-width="0.8" stroke-linejoin="round"/><circle cx="-6.7" cy="-4.8" r="0.9" fill="#444" stroke="none" stroke-width="1"/><circle cx="0.3" cy="-7.5" r="0.9" fill="#444" stroke="none" stroke-width="1"/><circle cx="6.9" cy="-5.3" r="0.9" fill="#444" stroke="none" stroke-width="1"/><circle cx="1.1" cy="-2.2" r="0.9" fill="#444" stroke="none" stroke-width="1"/><circle cx="-5.9" cy="4.5" r="0.9" fill="#444" stroke="none" stroke-width="1"/><circle cx="1.6" cy="7.7" r="0.9" fill="#444" stroke="none" stroke-width="1"/><circle cx="6.6" cy="3.8" r="0.9" fill="#444" stroke="none" stroke-width="1"/><path d="M-5.9 4.5 L0.6 1.8 L6.6 3.8 M0.6 1.8 L0.3 -7.5" fill="none" stroke="#777" stroke-width="0.6" /></g>
<g transform="translate(674.5,50)" ><path d="M0.3 -7.5 L6.9 -5.3 L1.1 -2.2 L-6.7 -4.8Z" fill="#fff" stroke="#444" stroke-width="0.8" stroke-linejoin="round"/><path d="M-6.7 -4.8 L1.1 -2.2 L1.6 7.7 L-5.9 4.5Z" fill="#fff" stroke="#444" stroke-width="0.8" stroke-linejoin="round"/><path d="M6.9 -5.3 L1.1 -2.2 L1.6 7.7 L6.6 3.8Z" fill="#F4F4F4" stroke="#444" stroke-width="0.8" stroke-linejoin="round"/><circle cx="-6.7" cy="-4.8" r="0.9" fill="#444" stroke="none" stroke-width="1"/><circle cx="0.3" cy="-7.5" r="0.9" fill="#444" stroke="none" stroke-width="1"/><circle cx="6.9" cy="-5.3" r="0.9" fill="#444" stroke="none" stroke-width="1"/><circle cx="1.1" cy="-2.2" r="0.9" fill="#444" stroke="none" stroke-width="1"/><circle cx="-5.9" cy="4.5" r="0.9" fill="#444" stroke="none" stroke-width="1"/><circle cx="1.6" cy="7.7" r="0.9" fill="#444" stroke="none" stroke-width="1"/><circle cx="6.6" cy="3.8" r="0.9" fill="#444" stroke="none" stroke-width="1"/></g>
<g transform="translate(698.5,50)" ><path d="M0.3 -7.5 L6.9 -5.3 L1.1 -2.2 L-6.7 -4.8Z" fill="#E8DCB0" stroke="#504430" stroke-width="0.8" stroke-linejoin="round"/><path d="M-6.7 -4.8 L1.1 -2.2 L1.6 7.7 L-5.9 4.5Z" fill="#A89670" stroke="#504430" stroke-width="0.8" stroke-linejoin="round"/><path d="M6.9 -5.3 L1.1 -2.2 L1.6 7.7 L6.6 3.8Z" fill="#8C7A58" stroke="#504430" stroke-width="0.8" stroke-linejoin="round"/><circle cx="-6.7" cy="-4.8" r="0.9" fill="#504430" stroke="none" stroke-width="1"/><circle cx="0.3" cy="-7.5" r="0.9" fill="#504430" stroke="none" stroke-width="1"/><circle cx="6.9" cy="-5.3" r="0.9" fill="#504430" stroke="none" stroke-width="1"/><circle cx="1.1" cy="-2.2" r="0.9" fill="#504430" stroke="none" stroke-width="1"/><circle cx="-5.9" cy="4.5" r="0.9" fill="#504430" stroke="none" stroke-width="1"/><circle cx="1.6" cy="7.7" r="0.9" fill="#504430" stroke="none" stroke-width="1"/><circle cx="6.6" cy="3.8" r="0.9" fill="#504430" stroke="none" stroke-width="1"/></g>
<g transform="translate(722,50)" ><path d="M0.3 -7.5 L6.9 -5.3 L1.1 -2.2 L-6.7 -4.8Z" fill="#4A4A3C" stroke="#101008" stroke-width="0.8" stroke-linejoin="round"/><path d="M-6.7 -4.8 L1.1 -2.2 L1.6 7.7 L-5.9 4.5Z" fill="#2A2A22" stroke="#101008" stroke-width="0.8" stroke-linejoin="round"/><path d="M6.9 -5.3 L1.1 -2.2 L1.6 7.7 L6.6 3.8Z" fill="#1A1A14" stroke="#101008" stroke-width="0.8" stroke-linejoin="round"/><circle cx="-6.7" cy="-4.8" r="0.9" fill="#101008" stroke="none" stroke-width="1"/><circle cx="0.3" cy="-7.5" r="0.9" fill="#101008" stroke="none" stroke-width="1"/><circle cx="6.9" cy="-5.3" r="0.9" fill="#101008" stroke="none" stroke-width="1"/><circle cx="1.1" cy="-2.2" r="0.9" fill="#101008" stroke="none" stroke-width="1"/><circle cx="-5.9" cy="4.5" r="0.9" fill="#101008" stroke="none" stroke-width="1"/><circle cx="1.6" cy="7.7" r="0.9" fill="#101008" stroke="none" stroke-width="1"/><circle cx="6.6" cy="3.8" r="0.9" fill="#101008" stroke="none" stroke-width="1"/><path d="M-6.4 -1.5 L1.2 1 L6.8 -2 M-6.1 1.8 L1.4 4.6 L6.7 1.2" fill="none" stroke="#C8C0A0" stroke-width="1.2" /></g>
<g transform="translate(744,50)" ><path d="M0.3 -7.5 L6.9 -5.3 L1.1 -2.2 L-6.7 -4.8Z" fill="#fff" stroke="#505890" stroke-width="0.8" stroke-linejoin="round"/><path d="M-6.7 -4.8 L1.1 -2.2 L1.6 7.7 L-5.9 4.5Z" fill="#5A6AD0" stroke="#505890" stroke-width="0.8" stroke-linejoin="round"/><path d="M6.9 -5.3 L1.1 -2.2 L1.6 7.7 L6.6 3.8Z" fill="#3C4CB8" stroke="#505890" stroke-width="0.8" stroke-linejoin="round"/><circle cx="-6.7" cy="-4.8" r="0.9" fill="#505890" stroke="none" stroke-width="1"/><circle cx="0.3" cy="-7.5" r="0.9" fill="#505890" stroke="none" stroke-width="1"/><circle cx="6.9" cy="-5.3" r="0.9" fill="#505890" stroke="none" stroke-width="1"/><circle cx="1.1" cy="-2.2" r="0.9" fill="#505890" stroke="none" stroke-width="1"/><circle cx="-5.9" cy="4.5" r="0.9" fill="#505890" stroke="none" stroke-width="1"/><circle cx="1.6" cy="7.7" r="0.9" fill="#505890" stroke="none" stroke-width="1"/><circle cx="6.6" cy="3.8" r="0.9" fill="#505890" stroke="none" stroke-width="1"/></g>
<g transform="translate(778.5,51)" ><path d="M-7 -3 H-3 L-2 -5 H3 L4 -3 H7 V5 H-7Z" fill="#3C3C3C" stroke="#1A1A1A" stroke-width="0.7" /><circle cx="1" cy="1" r="3.2" fill="#777" stroke="#111" stroke-width="0.9"/><circle cx="1" cy="1" r="1.4" fill="#222" stroke="none" stroke-width="1"/></g>
<g transform="translate(800.5,50)" ><path d="M-6 -2 H7 V7 H-6Z" fill="#4A4A4A" stroke="#222" stroke-width="0.7" /><path d="M-7 -5 L6 -8 L7 -5 L-6 -2Z" fill="#E0E0E0" stroke="#222" stroke-width="0.7" /><path d="M-4 -5.7 l1.5 3 M-0.5 -6.5 l1.5 3 M3 -7.3 l1.5 3" fill="none" stroke="#222" stroke-width="1.3" /></g>
<defs><radialGradient id="sph" cx="35%" cy="30%" r="70%"><stop offset="0" stop-color="#E0E0E0"/><stop offset="1" stop-color="#484848"/></radialGradient></defs>
<g transform="translate(824,50)" ><circle cx="0" cy="0" r="7" fill="url(#sph)" stroke="none" stroke-width="1"/></g>
<g transform="translate(847,50)" ><path d="M-4.5 -3 A4.5 4.5 0 1 1 4.5 -3 C4.5 0 2.5 1 2.5 3.5 H-2.5 C-2.5 1 -4.5 0 -4.5 -3Z" fill="#fff" stroke="#999" stroke-width="0.7" /><path d="M-2 4 H2 V8 H-2Z" fill="#777" stroke="none" stroke-width="1" /></g>
<g transform="translate(870,50)" ><circle cx="0" cy="0" r="4.6" fill="none" stroke="#5C5C58" stroke-width="2.8"/><circle cx="0" cy="0" r="6.3" fill="none" stroke="#6C6C68" stroke-width="1.6" stroke-dasharray="2 1.3"/><circle cx="0" cy="0" r="1.8" fill="#A8A8A0" stroke="none" stroke-width="1"/></g>
<g transform="translate(20,74.5)" ><path d="M-4 -8 V6.5 L-0.8 3.6 L1.6 9 L4.2 7.8 L1.8 2.6 H6.5Z" fill="#000" stroke="#fff" stroke-width="0.6" /></g>
<g transform="translate(47.5,74.5)" ><path d="M-7 7 L8 2" fill="none" stroke="#9A9A94" stroke-width="1.2" /><path d="M-5 3 L5 -8 L8 -5.5 L-2.5 5.5Z" fill="#D81818" stroke="#8A1010" stroke-width="0.6" /><path d="M-5 3 L-2.5 5.5 L-7.5 7.5Z" fill="#E8C890" stroke="#5A4020" stroke-width="0.5" /><path d="M-7.5 7.5 l1.3 -2 l1 1z" fill="#222" stroke="none" stroke-width="1" /></g>
<g transform="translate(71,74.5)" ><path d="M-7 -7 L7 -8 L8 7 L-6 8Z" fill="#B09670" stroke="#4A3C28" stroke-width="1" /></g>
<g transform="translate(93.5,74.5)" ><circle cx="0" cy="0" r="7.5" fill="#B09670" stroke="#3A3020" stroke-width="1.1"/></g>
<g transform="translate(117,74.5)" ><path d="M-5 8 C-10 0 -4 -8 7 -6" fill="none" stroke="#111" stroke-width="2" /><path d="M-5.5 0 C-2 -3 3 -3.5 8 -2.5" fill="none" stroke="#444" stroke-width="0.8" /></g>
<g transform="translate(146,74.5)" ><path d="M-6 -2 L1 -6 L6 -3 L-1 1Z" fill="#fff" stroke="#BBB" stroke-width="0.6" /><path d="M-6 -2 L-1 1 L0 6 L-5 3Z" fill="#E4E4E4" stroke="#BBB" stroke-width="0.6" /><path d="M-1 1 L6 -3 L7 2 L0 6Z" fill="#F2F2F2" stroke="#BBB" stroke-width="0.6" /></g>
<g transform="translate(169,74.5)" ><path d="M-7.1 3.6 L-0.3 -6.1 L3.8 -2.5 L-1.3 7.6Z" fill="#E26C8A" stroke="#A03858" stroke-width="0.5" /><path d="M-0.3 -6.1 L5.3 -6.8 L6.8 -4.1 L3.8 -2.5Z" fill="#F2A6B8" stroke="#A03858" stroke-width="0.4" /><path d="M3.8 -2.5 L6.8 -4.1 L5.3 2.5 L-1.3 7.6Z" fill="#6C3C4A" stroke="none" stroke-width="1" /><path d="M-1.8 -2.5 L0.7 -4.1 L0.2 -0.5 L-1.6 0.5Z" fill="#A02848" stroke="none" stroke-width="1" /><path d="M5.3 2.5 L8 3.5 L1 8 L-1.3 7.6Z" fill="#A8A49C" stroke="none" stroke-width="1" /></g>
<g transform="translate(192,74.5)" ><path d="M-1.5 1.5 L-7.4 6.6 L-6 8.2 L0.5 3.5Z" fill="#E8C020" stroke="#4A3C08" stroke-width="0.7" /><path d="M-4 -5.2 C-4 -7 4 -8 6 -7 C7 -4 7 0 6.4 2 C4 3.5 0 4.3 -2 3.5 C-3.5 1 -4 -2 -4 -5.2Z" fill="#242420" stroke="#000" stroke-width="0.5" /><path d="M-4 -5 C-4 -2 -3.5 1 -2 3.5 C0 4.3 4 3.5 6.4 2" fill="none" stroke="#E8C020" stroke-width="1.3" /><ellipse cx="3" cy="-1.8" rx="2.6" ry="3" fill="#F8A010" stroke="#7A4A00" stroke-width="0.5" transform="rotate(-10 3 -1.8)"/><path d="M1 5 L8 4.5 L6 6.5 L0 6.5Z" fill="#B4B0A8" stroke="none" stroke-width="1" /></g>
<g transform="translate(214,74.5)" ><path d="M-2 7 L8 6 L6 8 L-1 8.5Z" fill="#B4B0A8" stroke="none" stroke-width="1" /><path d="M-3.5 -1 L3.5 -4.5 L7.5 2.5 L1 6.5 C-1 6.5 -3 3 -3.5 -1Z" fill="#D8D0A0" stroke="#111" stroke-width="1" /><ellipse cx="0" cy="-2.8" rx="4" ry="1.9" fill="#3A3A30" stroke="#000" stroke-width="0.6" transform="rotate(-27 0 -2.8)"/><path d="M2 -5 C6 -9 9 -3 7 1" fill="none" stroke="#111" stroke-width="1.3" /><path d="M1 -6 C-3 -5 -7 -1 -7.5 3 C-7 6 -6 7.5 -5.5 8 C-5.5 5 -5 2 -3 0 C-1 -2 1 -3.5 2.5 -4.5Z" fill="#F0E418" stroke="#3A3808" stroke-width="0.6" /></g>
<g transform="translate(243.5,74.5)" ><path d="M-7.5 2 L0 -0.5 L7.5 2 L0 5Z" fill="#C8B080" stroke="#3A2C14" stroke-width="0.6" /><path d="M-7.5 2 L0 5 V8.5 L-7.5 5Z" fill="#7A6238" stroke="#3A2C14" stroke-width="0.6" /><path d="M7.5 2 L0 5 V8.5 L7.5 5Z" fill="#4A3A1C" stroke="#3A2C14" stroke-width="0.6" /><path d="M0 -8.5 L3.2 -3.5 H1.3 V2 H-1.3 V-3.5 H-3.2Z" fill="#D82020" stroke="#8A0C0C" stroke-width="0.5" /></g>
<g transform="translate(267.5,74.5)" ><path d="M0 -7.5 L2.3 -4 L1 -1 L4 -2.3 L7.5 0 L4 2.3 L1 1 L2.3 4 L0 7.5 L-2.3 4 L-1 1 L-4 2.3 L-7.5 0 L-4 -2.3 L-1 -1 L-2.3 -4Z" fill="#D81C1C" stroke="#8A1010" stroke-width="0.5" transform="rotate(22)"/><circle cx="0" cy="0" r="1" fill="#F8D8D8" stroke="none" stroke-width="1"/></g>
<g transform="translate(289.5,74.5)" ><path d="M-6.3 0 A6.3 6.3 0 0 1 3.5 -5.3" fill="none" stroke="#CC1C1C" stroke-width="2.4" /><path d="M1.5 -8.5 L8 -2.5 L0.5 -1.5Z" fill="#CC1C1C" stroke="none" stroke-width="1" /><path d="M6.3 0.5 A6.3 6.3 0 0 1 -3.5 5.6" fill="none" stroke="#CC1C1C" stroke-width="2.4" /><path d="M-1.5 8.8 L-8 2.8 L-0.5 1.8Z" fill="#CC1C1C" stroke="none" stroke-width="1" /></g>
<g transform="translate(312.5,74.5)" ><path d="M-5 8 C-9 -2 -3 -8 7 -6.5" fill="none" stroke="#111" stroke-width="1.5" /><path d="M0 3 C-1.5 -1.5 1 -3.8 4.5 -3.3" fill="none" stroke="#111" stroke-width="1.3" /><path d="M-5 -8 L-2 -6.3 L1 -7.5 L0.3 -4.8 L3 -3 L-0.3 -2.8 L-1.8 0 L-2.8 -3.2 L-6 -3.8 L-3.8 -5.8Z" fill="#D01C24" stroke="#7A0C0C" stroke-width="0.4" /></g>
<g transform="translate(342,74.5)" ><path d="M-7.5 -1.5 C-5.5 -6.5 2 -7.5 5 -3.2 L7 -4.8 L6.6 1.6 L0.8 -0.4 L2.8 -1.8 C1 -4 -3 -3.8 -4.6 -0.6Z" fill="#3C8CF0" stroke="#1C5CB8" stroke-width="0.4" /><path d="M-7.5 -1.5 C-5.5 -6.5 2 -7.5 5 -3.2 L7 -4.8 L6.6 1.6 L0.8 -0.4 L2.8 -1.8 C1 -4 -3 -3.8 -4.6 -0.6Z" fill="#5CA4F8" stroke="#1C5CB8" stroke-width="0.4" transform="rotate(180)"/><ellipse cx="0" cy="0" rx="7.6" ry="3" fill="none" stroke="#283848" stroke-width="0.9" transform="rotate(-55 0 0)"/><path d="M-2 -7.5 C-4 -3 -3 3 1 7.5" fill="none" stroke="#283848" stroke-width="0.9" /></g>
<g transform="translate(364.5,74.5)" ><path d="M-3 8 L-7 2 C-8 0 -6 -1 -5 0 L-3.5 2 L-4.5 -5 C-4.5 -7 -2.5 -7 -2.3 -5 L-1.8 -1 L-1.3 -7 C-1.2 -9 1 -9 1 -7 L1 -1 L2.5 -6 C3 -8 5 -7.5 4.6 -5.5 L3.6 0 L5.5 -3.5 C6.5 -5 8 -4 7.3 -2.5 L4.5 4 L4 8Z" fill="#fff" stroke="#000" stroke-width="0.9" transform="rotate(24) scale(.93)"/></g>
<g transform="translate(387.5,74.5)" ><path d="M0.5 0.5 L6.5 7.5" fill="none" stroke="#111" stroke-width="2.2" stroke-linecap="round"/><circle cx="-2.6" cy="-3" r="4" fill="#98C4E4" stroke="#1C3C5C" stroke-width="1.5"/><path d="M-5 -3.8 A2.6 2.6 0 0 1 -3 -5.5" fill="none" stroke="#E8F4FF" stroke-width="0.9" /></g>
<g transform="translate(410,74.5)" ><path d="M-7.5 -8 l4.5 .8 l-3.7 3.7z M6 -8 l-4.5 .8 l3.7 3.7z M-7.5 5.5 l4.5 -.8 l-3.7 -3.7z M6.5 4 l-3.5 -2.5 l-.2 3.5z" fill="#4878D0" stroke="#2850A0" stroke-width="0.4" /><path d="M-5.5 -6 L-3 -3.5 M4 -6 L1.5 -3.5 M-5.5 3.5 L-3 1" fill="none" stroke="#4878D0" stroke-width="1.8" /><path d="M1 0.5 L7.5 8" fill="none" stroke="#111" stroke-width="2.1" stroke-linecap="round"/><circle cx="-0.8" cy="-2.2" r="3.6" fill="#98C4E4" stroke="#1C3C5C" stroke-width="1.4"/></g>
<g transform="translate(439.5,74.5)" ><path d="M-8 -2 L-3 -7 L7 -7 L5 3 L-6 5Z" fill="#D8D0B8" stroke="#6A6450" stroke-width="0.7" /><path d="M-6 -5 L6 -6 L4 1 L-7 2Z" fill="#F4EED8" stroke="#8A846A" stroke-width="0.5" /><g transform="translate(1,1)"><path d="M-2 -7 H2 V-1 H5 L0 5 L-5 -1 H-2Z" fill="#F4E418" stroke="#5A5408" stroke-width="0.6" /></g></g>
<g transform="translate(463,74.5)" ><path d="M-7 -5 L3 -7 L8 4 L-3 7Z" fill="#E6E6E2" stroke="#B8B8B2" stroke-width="0.7" /><path d="M-7 -5 L-1 0 L-3 7" fill="none" stroke="#C4C4BE" stroke-width="0.7" /><path d="M-1 0 L8 4" fill="none" stroke="#C4C4BE" stroke-width="0.7" /></g>
<g transform="translate(492.5,74.5)" ><path d="M-8 3 L1 0 L8 4 L-1 8Z" fill="#6CB4D8" stroke="#3A6A3A" stroke-width="0.5" /><path d="M-8 3 L-3 1.4 L2 6.5 L-1 8Z" fill="#E8D020" stroke="none" stroke-width="1" /><path d="M-3 -6 L2 -8 L5 -6 L5 2 L0 4 L-3 2Z" fill="#8A4A30" stroke="#3A2010" stroke-width="0.6" /><path d="M-3 -6 L0 -4.5 L5 -6" fill="none" stroke="#3A2010" stroke-width="0.5" /><path d="M0 -4.5 V4" fill="none" stroke="#3A2010" stroke-width="0.5" /></g>
<g transform="translate(514,74.5)" ><path d="M-2 -8 L1 -8 L2 2 L-3 2Z" fill="#F08020" stroke="#A04808" stroke-width="0.5" /><path d="M-8 8 L-1 1 L3 4 L8 2" fill="none" stroke="#48A030" stroke-width="1.6" /><path d="M-6 3 L4 7" fill="none" stroke="#C03020" stroke-width="1.2" /></g>
<defs><radialGradient id="earth" cx="40%" cy="35%" r="70%"><stop offset="0" stop-color="#9CC8F8"/><stop offset="1" stop-color="#1848B0"/></radialGradient></defs>
<g transform="translate(538.5,74.5)" ><circle cx="0" cy="0" r="7.8" fill="url(#earth)" stroke="#103080" stroke-width="0.6"/><path d="M-7 -2 C-3 -5 3 -5 7 -2 M-7.5 2 C-3 -1 3 -1 7.5 2" fill="none" stroke="#fff" stroke-width="0.9" /><g transform="translate(0,3) scale(0.9)"><path d="M-2 7 H2 V1 H5 L0 -5 L-5 1 H-2Z" fill="#F8A018" stroke="#7A4808" stroke-width="0.6" /></g></g>
<g transform="translate(567,74.5)" ><path d="M-7 -1 L0 -4 L7 -1 L0 2Z" fill="#3A3628" stroke="#2A2618" stroke-width="0.6" /><path d="M-7 -1 L0 2 V8 L-7 5Z" fill="#8A8468" stroke="#2A2618" stroke-width="0.6" /><path d="M7 -1 L0 2 V8 L7 5Z" fill="#5A5440" stroke="#2A2618" stroke-width="0.6" /><path d="M-7 -1 L-9 -4 L-2 -7 L0 -4Z" fill="#8A8468" stroke="#2A2618" stroke-width="0.5" /><path d="M7 -1 L9 -4 L2 -7 L0 -4Z" fill="#5A5440" stroke="#2A2618" stroke-width="0.5" /><g transform="translate(3,3) scale(0.85)"><path d="M-2 -7 H2 V-1 H5 L0 5 L-5 -1 H-2Z" fill="#F4E418" stroke="#5A5408" stroke-width="0.6" /></g></g>
<g transform="translate(589.5,74.5)" ><path d="M-7 -1 L0 -4 L7 -1 L0 2Z" fill="#3A3628" stroke="#2A2618" stroke-width="0.6" /><path d="M-7 -1 L0 2 V8 L-7 5Z" fill="#8A8468" stroke="#2A2618" stroke-width="0.6" /><path d="M7 -1 L0 2 V8 L7 5Z" fill="#5A5440" stroke="#2A2618" stroke-width="0.6" /><path d="M-7 -1 L-9 -4 L-2 -7 L0 -4Z" fill="#8A8468" stroke="#2A2618" stroke-width="0.5" /><path d="M7 -1 L9 -4 L2 -7 L0 -4Z" fill="#5A5440" stroke="#2A2618" stroke-width="0.5" /><g transform="translate(-2,2) scale(0.95)"><path d="M-2 7 H2 V1 H5 L0 -5 L-5 1 H-2Z" fill="#F8A018" stroke="#7A4808" stroke-width="0.6" /></g></g>
<g transform="translate(612,74.5)" ><g transform="translate(-2,2)"><path d="M-2 7 H2 V1 H5 L0 -5 L-5 1 H-2Z" fill="#F4F4F4" stroke="#C0C0BC" stroke-width="0.6" /></g><path d="M0 -2 L5 -6 L9 -2 L9 4 L2 6Z" fill="#F8F8F8" stroke="#C4C4C0" stroke-width="0.6" /></g>
<g transform="translate(645,74.5)" ><path d="M-8 -5 L5 -7 L8 5 L-6 8Z" fill="#9A8262" stroke="#5A4830" stroke-width="0.8" /><path d="M-7 -2 C-2 -5 2 0 7 -3 M-7 2 C-2 -1 2 4 7.5 1 M-6.5 5.5 C-2 3 2 7 7.8 4" fill="none" stroke="#5A4830" stroke-width="0.7" /></g>
<g transform="translate(668.5,74.5)" ><path d="M-8 -5 L5 -7 L8 5 L-6 8Z" fill="#B49C78" stroke="#5A4830" stroke-width="0.8" /><path d="M-4 -5.5 L-1 7 M1 -6.3 L4 6 M-7.5 -1 L6 -3 M-7 3.5 L7 1" fill="none" stroke="#8A7250" stroke-width="0.5" /></g>
<g transform="translate(698.5,74.5)" ><path d="M-8 -5 L5 -7 L8 5 L-6 8Z" fill="#A89070" stroke="#5A4830" stroke-width="0.8" /><path d="M-4 -5.5 L-1 7 M1 -6.3 L4 6 M-7.5 -1 L6 -3 M-7 3.5 L7 1" fill="none" stroke="#7A6240" stroke-width="0.5" /><path d="M-2 -8 L1.5 -3 H-0.2 V3 H1.5 L-2 8 L-5.5 3 H-3.8 V-3 H-5.5Z" fill="#D82020" stroke="#7A0C0C" stroke-width="0.5" /></g>
<g transform="translate(722,74.5)" ><path d="M-8 -5 L5 -7 L8 5 L-6 8Z" fill="#A89070" stroke="#5A4830" stroke-width="0.8" /><path d="M-3 -3 L1 -6 L5 -3 L1 0Z" fill="#fff" stroke="#888" stroke-width="0.5" /><path d="M-3 -3 L1 0 V5 L-3 2Z" fill="#E0E0E0" stroke="#888" stroke-width="0.5" /><path d="M5 -3 L1 0 V5 L5 2Z" fill="#C8C8C8" stroke="#888" stroke-width="0.5" /></g>
<g transform="translate(744.5,74.5)" ><path d="M-8 -5 L5 -7 L8 5 L-6 8Z" fill="#B09878" stroke="#5A4830" stroke-width="0.8" /><ellipse cx="0.5" cy="0.5" rx="4" ry="3.6" fill="none" stroke="#6A5030" stroke-width="1" transform="rotate(0 0.5 0.5)"/></g>
<g transform="translate(767.5,74.5)" ><path d="M-8 -5 L5 -7 L8 5 L-6 8Z" fill="#A89070" stroke="#5A4830" stroke-width="0.8" /><path d="M-8 -5 L8 5 M5 -7 L-6 8 M-2 -6 L1 6.5 M-7 1.5 L6.5 -1" fill="none" stroke="#6A5436" stroke-width="0.6" /></g>
<g transform="translate(791,74.5)" ><path d="M-8 -5 L5 -7 L8 5 L-6 8Z" fill="#A08868" stroke="#5A4830" stroke-width="0.8" /><path d="M-8 -5 L8 5" fill="none" stroke="#5A4830" stroke-width="0.6" /><path d="M5 -7 L-6 8" fill="none" stroke="#D82020" stroke-width="1.3" /></g>
<g transform="translate(822,75.5)" ><path d="M-8 4 L-1 0 L8 3 L1 7.5Z" fill="#fff" stroke="#111" stroke-width="1.1" /><path d="M-8 1.5 L-1 -2.5 L8 0.5 L1 5.0Z" fill="#fff" stroke="#111" stroke-width="1.1" /><path d="M-8 -1 L-1 -5 L8 -2 L1 2.5Z" fill="#fff" stroke="#111" stroke-width="1.1" /><path d="M-8 -1 L-1 -5 L8 -2 L1 2.5Z" fill="#fff" stroke="#222" stroke-width="0.8" /><path d="M4 -8 L9 -5 L2 -1 L-1 -3Z" fill="#fff" stroke="#222" stroke-width="0.6" /><text x="-5" y="0" font-size="7" font-weight="bold" fill="#D82020" font-family="Liberation Sans,sans-serif">S</text></g>
<g transform="translate(846,75.5)" ><path d="M-8 4 L-1 0 L8 3 L1 7.5Z" fill="#fff" stroke="#111" stroke-width="1.1" /><path d="M-8 1.5 L-1 -2.5 L8 0.5 L1 5.0Z" fill="#fff" stroke="#111" stroke-width="1.1" /><path d="M-8 -1 L-1 -5 L8 -2 L1 2.5Z" fill="#fff" stroke="#111" stroke-width="1.1" /><path d="M-8 -1 L-1 -5 L8 -2 L1 2.5Z" fill="#fff" stroke="#1838A0" stroke-width="0.9" /><path d="M-4 -1.5 L2 -4.5 M-2 -0.5 L4 -3.5 M0 0.5 L6 -2.5" fill="none" stroke="#2858D0" stroke-width="1" /></g>
<g transform="translate(869,75.5)" ><path d="M-8 4 L-1 0 L8 3 L1 7.5Z" fill="#fff" stroke="#111" stroke-width="1.1" /><path d="M-8 1.5 L-1 -2.5 L8 0.5 L1 5.0Z" fill="#fff" stroke="#111" stroke-width="1.1" /><path d="M-8 -1 L-1 -5 L8 -2 L1 2.5Z" fill="#fff" stroke="#111" stroke-width="1.1" /><path d="M-5 -3 L1 -7 L7 -5 L7 -2 L3 1 V4" fill="none" stroke="#D82020" stroke-width="2.4" /><path d="M2 6 v2" fill="none" stroke="#D82020" stroke-width="2.2" /></g>
<g transform="translate(892,75.5)" ><path d="M-8 4 L-1 0 L8 3 L1 7.5Z" fill="#fff" stroke="#111" stroke-width="1.1" /><path d="M-8 1.5 L-1 -2.5 L8 0.5 L1 5.0Z" fill="#fff" stroke="#111" stroke-width="1.1" /><path d="M-8 -1 L-1 -5 L8 -2 L1 2.5Z" fill="#fff" stroke="#111" stroke-width="1.1" /><path d="M-9 -2 H-1 V-7 L8 0 L-1 7 V2 H-9Z" fill="#1858E8" stroke="#0C38A0" stroke-width="0.6" /><text x="-6" y="2" font-size="6" font-weight="bold" fill="#D82020" font-family="Liberation Sans,sans-serif">S</text></g>
<g transform="translate(18.5,99)" ><path d="M-6 -6 H6" fill="none" stroke="#666" stroke-width="0.7" /><path d="M-7 5 C-5 -4 5 -4 7 5" fill="none" stroke="#4048B8" stroke-width="1.6" /><circle cx="-6" cy="-6" r="0.95" fill="#E02828" stroke="none" stroke-width="1"/><circle cx="6" cy="-6" r="0.95" fill="#E02828" stroke="none" stroke-width="1"/><circle cx="-7" cy="5" r="0.95" fill="#E02828" stroke="none" stroke-width="1"/><circle cx="7" cy="5" r="0.95" fill="#E02828" stroke="none" stroke-width="1"/></g>
<g transform="translate(42,99)" ><path d="M-7 5 L-1 -5 L2 6 L6 -6" fill="none" stroke="#4048B8" stroke-width="1.3" /><circle cx="-7" cy="5" r="0.95" fill="#E02828" stroke="none" stroke-width="1"/><circle cx="-1" cy="-5" r="0.95" fill="#E02828" stroke="none" stroke-width="1"/><circle cx="2" cy="6" r="0.95" fill="#E02828" stroke="none" stroke-width="1"/><circle cx="6" cy="-6" r="0.95" fill="#E02828" stroke="none" stroke-width="1"/></g>
<g transform="translate(66,99)" ><path d="M-7 -7 C-4 -9 0 -8 1 -5 C0 -2 -5 -1 -7 -3Z" fill="#A8A8A0" stroke="none" stroke-width="1" /><path d="M-7 5 L-2 -4 L3 6 L7 -5" fill="none" stroke="#A04040" stroke-width="1.25" /><circle cx="-7" cy="5" r="0.95" fill="#E02828" stroke="none" stroke-width="1"/><circle cx="3" cy="6" r="0.95" fill="#E02828" stroke="none" stroke-width="1"/><circle cx="7" cy="-5" r="0.95" fill="#E02828" stroke="none" stroke-width="1"/></g>
<g transform="translate(88,99)" ><path d="M-7 4 C-5 -12 -1 -6 0 0 C1 8 5 10 6 -6" fill="none" stroke="#4048B8" stroke-width="1.3" /><circle cx="-7" cy="4" r="0.95" fill="#E02828" stroke="none" stroke-width="1"/><circle cx="-3" cy="-6" r="0.95" fill="#E02828" stroke="none" stroke-width="1"/><circle cx="2" cy="6" r="0.95" fill="#E02828" stroke="none" stroke-width="1"/><circle cx="6" cy="-6" r="0.95" fill="#E02828" stroke="none" stroke-width="1"/></g>
<g transform="translate(111.5,99)" ><path d="M-6 7 C0 7 1 4 0 0 C-1 -5 1 -7 7 -7" fill="none" stroke="#4048B8" stroke-width="1.25" /><path d="M-6 7 L1 5 M-1 -7 L7 -7" fill="none" stroke="#666" stroke-width="0.6" /><circle cx="-6" cy="7" r="0.95" fill="#E02828" stroke="none" stroke-width="1"/><circle cx="1" cy="5" r="0.95" fill="#E02828" stroke="none" stroke-width="1"/><circle cx="-1" cy="-7" r="0.95" fill="#E02828" stroke="none" stroke-width="1"/><circle cx="7" cy="-7" r="0.95" fill="#E02828" stroke="none" stroke-width="1"/></g>
<g transform="translate(134,99)" ><path d="M-6 6 C-7 -3 -2 -7 6 -7" fill="none" stroke="#30D030" stroke-width="2.2" /><circle cx="-6" cy="6" r="0.95" fill="#E02828" stroke="none" stroke-width="1"/><circle cx="6" cy="-7" r="0.95" fill="#E02828" stroke="none" stroke-width="1"/><circle cx="-5" cy="7" r="0.95" fill="#E02828" stroke="none" stroke-width="1"/></g>
<g transform="translate(157.5,99)" ><rect x="-6.5" y="-6.5" width="13" height="13" rx="3" fill="none" stroke="#5058C8" stroke-width="1.35"/><path d="M-3 7 H3" fill="none" stroke="#C05050" stroke-width="1" /></g>
<g transform="translate(180,99)" ><path d="M-3 2 C-5 -2 0 -5 3 -2 C6 2 2 7 -3 6 C-9 4 -8 -6 0 -7 C4 -7 7 -4 7 -1" fill="none" stroke="#4048B8" stroke-width="1.35" /></g>
<g transform="translate(202.5,99)" ><path d="M-5 7 C-8 -1 -2 -7 6 -6" fill="none" stroke="#4048B8" stroke-width="1.35" /><path d="M3 -6.6 L7 -5.5" fill="none" stroke="#E02828" stroke-width="1.35" /></g>
<g transform="translate(226,99)" ><path d="M-7 4 L-1 -6 L2 6 L7 -7" fill="none" stroke="#70903C" stroke-width="1.35" /></g>
<g transform="translate(249,99)" ><path d="M-6 -6 C-2 -7 0 -5 1 -3 C2 0 6 -1 6 6" fill="none" stroke="#5058B0" stroke-width="1.3" /><path d="M4 3 L6 7" fill="none" stroke="#5058B0" stroke-width="1.45" /></g>
<g transform="translate(272.5,99)" ><path d="M-6 7 C-7 -2 -2 -7 3 -4 C4 -3 5 -1 7 -2" fill="none" stroke="#5860A8" stroke-width="1.25" /></g>
<g transform="translate(294.5,99)" ><path d="M-5 7 C-9 -2 -2 -8 7 -6" fill="none" stroke="#D03038" stroke-width="1.45" /><path d="M-5 7 C-6 5 -6.5 3 -6.5 1" fill="none" stroke="#5058B0" stroke-width="1.45" /></g>
<g transform="translate(326,99)" ><path d="M-7 5 L-1 -4 L1 5 L7 -6" fill="none" stroke="#7C9050" stroke-width="1.25" /></g>
<g transform="translate(349,99)" ><polygon points="7.0,0.0 4.9,4.9 0.0,7.0 -4.9,4.9 -7.0,0.0 -4.9,-4.9 -0.0,-7.0 4.9,-4.9" fill="none" stroke="#6C9C8C" stroke-width="1.3"/><circle cx="7.0" cy="0.0" r="1.2" fill="#5C8C7C" stroke="none" stroke-width="1"/><circle cx="4.949747468305833" cy="4.949747468305832" r="1.2" fill="#5C8C7C" stroke="none" stroke-width="1"/><circle cx="4.286263797015736e-16" cy="7.0" r="1.2" fill="#5C8C7C" stroke="none" stroke-width="1"/><circle cx="-4.949747468305832" cy="4.949747468305833" r="1.2" fill="#5C8C7C" stroke="none" stroke-width="1"/><circle cx="-7.0" cy="8.572527594031472e-16" r="1.2" fill="#5C8C7C" stroke="none" stroke-width="1"/><circle cx="-4.949747468305834" cy="-4.949747468305832" r="1.2" fill="#5C8C7C" stroke="none" stroke-width="1"/><circle cx="-1.2858791391047208e-15" cy="-7.0" r="1.2" fill="#5C8C7C" stroke="none" stroke-width="1"/><circle cx="4.949747468305832" cy="-4.949747468305834" r="1.2" fill="#5C8C7C" stroke="none" stroke-width="1"/></g>
<g transform="translate(372.5,99)" ><path d="M-7 5 L0 -2 C-1 -5 2 -8 5 -7 L3 -4 L5 -2 L8 -4 C8 -1 6 2 2 1 L-5 8Z" fill="#3C9020" stroke="#205008" stroke-width="0.6" /></g>
<g transform="translate(395.5,99)" ><ellipse cx="0" cy="0" rx="7.5" ry="5.5" fill="none" stroke="#C83848" stroke-width="1.5" transform="rotate(-40 0 0)"/><path d="M-7 3 C-6 7 0 8 4 5" fill="none" stroke="#4048C0" stroke-width="1.25" /></g>
<g transform="translate(418.5,99)" ><path d="M-7 -4 L6 -5 C9 2 3 8 0 7Z" fill="none" stroke="#D03048" stroke-width="1.25" /><path d="M-7 -4 L0 7" fill="none" stroke="#5048B0" stroke-width="1.25" /></g>
<g transform="translate(450,99)" ><path d="M-8 -5 C-4 -8 4 -8 8 -5 C8 2 4 7 0 8 C-4 7 -8 2 -8 -5Z" fill="#D8D4C0" stroke="#5A5A4A" stroke-width="0.8" /><path d="M-5 -6.5 C-5 0 -3 5 -1.5 7.5 M-2 -7 C-2 0 -1 5 0 8 M2 -7 C2 0 1.5 5 0.5 8 M5 -6.5 C5 0 3 5 1.8 7.5" fill="none" stroke="#6A6A58" stroke-width="0.7" /></g>
<g transform="translate(473,99)" ><path d="M-3 2 C-4 -8 6 -10 5 4" fill="none" stroke="#E04040" stroke-width="1.2" /><path d="M-8 0 h6 v6 h-6z" fill="#18A018" stroke="#0C600C" stroke-width="0.6" /><circle cx="5" cy="5.5" r="3" fill="#F0E020" stroke="#A09808" stroke-width="0.6"/></g>
<g transform="translate(495,99)" ><path d="M-8 -1 L-4 -7 L4 -7 L8 -2 L5 6 L-4 7Z" fill="#E4ECE0" stroke="#3C5C3C" stroke-width="0.8" /><path d="M-8 -1 L-1 -2 L-4 -7 M-1 -2 L4 -7 M-1 -2 L8 -2 M-1 -2 L-4 7 M-1 -2 L5 6" fill="none" stroke="#3C5C3C" stroke-width="0.6" /></g>
<g transform="translate(528,100)" ><path d="M0.3 -6.4 L5.9 -4.5 L0.9 -1.9 L-5.7 -4.1Z" fill="#fff" stroke="#111" stroke-width="0.6" stroke-linejoin="round"/><path d="M-5.7 -4.1 L0.9 -1.9 L1.4 6.5 L-5.0 3.8Z" fill="#333" stroke="#111" stroke-width="0.6" stroke-linejoin="round"/><path d="M5.9 -4.5 L0.9 -1.9 L1.4 6.5 L5.6 3.2Z" fill="#111" stroke="#111" stroke-width="0.6" stroke-linejoin="round"/><path d="M7 3 L11 5 L4 9 L0 7Z" fill="#555" stroke="none" stroke-width="1" /><circle cx="5" cy="5" r="4.2" fill="#3848D8" stroke="#1828A0" stroke-width="0.7"/><path d="M4.3 4 h1.4 v3.6 h-1.4z" fill="#fff" stroke="none" stroke-width="1" /><circle cx="5" cy="2.6" r="0.9" fill="#fff" stroke="none" stroke-width="1"/></g>
<g transform="translate(552,99)" ><path d="M0.3 -6.4 L5.9 -4.5 L0.9 -1.9 L-5.7 -4.1Z" fill="#fff" stroke="#111" stroke-width="0.6" stroke-linejoin="round"/><path d="M-5.7 -4.1 L0.9 -1.9 L1.4 6.5 L-5.0 3.8Z" fill="#333" stroke="#111" stroke-width="0.6" stroke-linejoin="round"/><path d="M5.9 -4.5 L0.9 -1.9 L1.4 6.5 L5.6 3.2Z" fill="#111" stroke="#111" stroke-width="0.6" stroke-linejoin="round"/><path d="M6 3 L12 5 L5 9 L0 6.5Z" fill="#444" stroke="none" stroke-width="1" /></g>
<defs><linearGradient id="mon" x1="0" x2="1"><stop offset="0" stop-color="#FFFDF0"/><stop offset=".3" stop-color="#FFC860"/><stop offset=".55" stop-color="#F87820"/><stop offset=".75" stop-color="#E81818"/><stop offset=".88" stop-color="#F8A0A0"/><stop offset="1" stop-color="#FFF0F0"/></linearGradient><linearGradient id="tim" x1="0" x2="1"><stop offset="0" stop-color="#F4F8FF"/><stop offset=".35" stop-color="#88A8E8"/><stop offset=".62" stop-color="#5868E0"/><stop offset=".85" stop-color="#101448"/><stop offset="1" stop-color="#000"/></linearGradient></defs>
<rect x="571.5" y="91.5" width="138" height="6" fill="url(#mon)" stroke="#808080" stroke-width="1"/>
<rect x="720.5" y="91.5" width="137" height="6" fill="url(#tim)" stroke="#808080" stroke-width="1"/>
<rect x="686.5" y="89.5" width="3" height="12" fill="#D4D0C8" stroke="#808080" stroke-width="1"/><path d="M687 90 v11" stroke="#fff"/>
<rect x="803.5" y="89.5" width="3" height="12" fill="#D4D0C8" stroke="#808080" stroke-width="1"/><path d="M804 90 v11" stroke="#fff"/>
<g transform="translate(11,131)" ><path d="M-4 -8 V6.5 L-0.8 3.6 L1.6 9 L4.2 7.8 L1.8 2.6 H6.5Z" fill="#000" stroke="#fff" stroke-width="0.6" /></g>
<g transform="translate(34,131)" ><path d="M-6 -2 L1 -6 L6 -3 L-1 1Z" fill="#fff" stroke="#AAA" stroke-width="0.6" /><path d="M-6 -2 L-1 1 L0 6 L-5 3Z" fill="#E0E0E0" stroke="#AAA" stroke-width="0.6" /><path d="M-1 1 L6 -3 L7 2 L0 6Z" fill="#F0F0F0" stroke="#AAA" stroke-width="0.6" /></g>
<g transform="translate(11,153)" ><path d="M-2 7 L8 6 L6 8 L-1 8.5Z" fill="#B4B0A8" stroke="none" stroke-width="1" /><path d="M-3.5 -1 L3.5 -4.5 L7.5 2.5 L1 6.5 C-1 6.5 -3 3 -3.5 -1Z" fill="#D8D0A0" stroke="#111" stroke-width="1" /><ellipse cx="0" cy="-2.8" rx="4" ry="1.9" fill="#3A3A30" stroke="#000" stroke-width="0.6" transform="rotate(-27 0 -2.8)"/><path d="M2 -5 C6 -9 9 -3 7 1" fill="none" stroke="#111" stroke-width="1.3" /><path d="M1 -6 C-3 -5 -7 -1 -7.5 3 C-7 6 -6 7.5 -5.5 8 C-5.5 5 -5 2 -3 0 C-1 -2 1 -3.5 2.5 -4.5Z" fill="#F0E418" stroke="#3A3808" stroke-width="0.6" /></g>
<g transform="translate(34,153)" ><path d="M-7.1 3.6 L-0.3 -6.1 L3.8 -2.5 L-1.3 7.6Z" fill="#E26C8A" stroke="#A03858" stroke-width="0.5" /><path d="M-0.3 -6.1 L5.3 -6.8 L6.8 -4.1 L3.8 -2.5Z" fill="#F2A6B8" stroke="#A03858" stroke-width="0.4" /><path d="M3.8 -2.5 L6.8 -4.1 L5.3 2.5 L-1.3 7.6Z" fill="#6C3C4A" stroke="none" stroke-width="1" /><path d="M-1.8 -2.5 L0.7 -4.1 L0.2 -0.5 L-1.6 0.5Z" fill="#A02848" stroke="none" stroke-width="1" /><path d="M5.3 2.5 L8 3.5 L1 8 L-1.3 7.6Z" fill="#A8A49C" stroke="none" stroke-width="1" /></g>
<g transform="translate(11,184)" ><path d="M-7.5 -1.5 C-5.5 -6.5 2 -7.5 5 -3.2 L7 -4.8 L6.6 1.6 L0.8 -0.4 L2.8 -1.8 C1 -4 -3 -3.8 -4.6 -0.6Z" fill="#3C8CF0" stroke="#1C5CB8" stroke-width="0.4" /><path d="M-7.5 -1.5 C-5.5 -6.5 2 -7.5 5 -3.2 L7 -4.8 L6.6 1.6 L0.8 -0.4 L2.8 -1.8 C1 -4 -3 -3.8 -4.6 -0.6Z" fill="#5CA4F8" stroke="#1C5CB8" stroke-width="0.4" transform="rotate(180)"/><ellipse cx="0" cy="0" rx="7.6" ry="3" fill="none" stroke="#283848" stroke-width="0.9" transform="rotate(-55 0 0)"/><path d="M-2 -7.5 C-4 -3 -3 3 1 7.5" fill="none" stroke="#283848" stroke-width="0.9" /></g>
<g transform="translate(34,184)" ><path d="M-3 8 L-7 2 C-8 0 -6 -1 -5 0 L-3.5 2 L-4.5 -5 C-4.5 -7 -2.5 -7 -2.3 -5 L-1.8 -1 L-1.3 -7 C-1.2 -9 1 -9 1 -7 L1 -1 L2.5 -6 C3 -8 5 -7.5 4.6 -5.5 L3.6 0 L5.5 -3.5 C6.5 -5 8 -4 7.3 -2.5 L4.5 4 L4 8Z" fill="#fff" stroke="#000" stroke-width="0.9" transform="rotate(24) scale(.93)"/></g>
<g transform="translate(11,205)" ><path d="M0.5 0.5 L6.5 7.5" fill="none" stroke="#111" stroke-width="2.2" stroke-linecap="round"/><circle cx="-2.6" cy="-3" r="4" fill="#98C4E4" stroke="#1C3C5C" stroke-width="1.5"/><path d="M-5 -3.8 A2.6 2.6 0 0 1 -3 -5.5" fill="none" stroke="#E8F4FF" stroke-width="0.9" /></g>
<g transform="translate(34,205)" ><rect x="-2" y="-3" width="10" height="10" fill="none" stroke="#2030C0" stroke-width="1" stroke-dasharray="2 1.5"/><path d="M0.5 0.5 L6.5 7.5" fill="none" stroke="#111" stroke-width="2.2" stroke-linecap="round"/><circle cx="-2.6" cy="-3" r="4" fill="#98C4E4" stroke="#1C3C5C" stroke-width="1.5"/><path d="M-5 -3.8 A2.6 2.6 0 0 1 -3 -5.5" fill="none" stroke="#E8F4FF" stroke-width="0.9" /></g>
<g transform="translate(11,227)" ><g transform="scale(1,1)"><path d="M1 1 L7.5 8" fill="none" stroke="#111" stroke-width="2.6" stroke-linecap="round"/><circle cx="-2" cy="-3" r="4.6" fill="#A8D0F0" stroke="#2A3A5A" stroke-width="1.3"/><path d="M-9 -2 L-3 0 L-7 5Z M-3 0 L5 -1 L3 5 L-5 4Z" fill="#3C7CD8" stroke="#1C4C98" stroke-width="0.5" /></g></g>
<g transform="translate(34,227)" ><g transform="scale(-1,1)"><path d="M1 1 L7.5 8" fill="none" stroke="#111" stroke-width="2.6" stroke-linecap="round"/><circle cx="-2" cy="-3" r="4.6" fill="#A8D0F0" stroke="#2A3A5A" stroke-width="1.3"/><path d="M-9 -2 L-3 0 L-7 5Z M-3 0 L5 -1 L3 5 L-5 4Z" fill="#3C7CD8" stroke="#1C4C98" stroke-width="0.5" /></g></g>
<g transform="translate(11,249)" ><path d="M-7.5 -8 l4.5 .8 l-3.7 3.7z M6 -8 l-4.5 .8 l3.7 3.7z M-7.5 5.5 l4.5 -.8 l-3.7 -3.7z M6.5 4 l-3.5 -2.5 l-.2 3.5z" fill="#4878D0" stroke="#2850A0" stroke-width="0.4" /><path d="M-5.5 -6 L-3 -3.5 M4 -6 L1.5 -3.5 M-5.5 3.5 L-3 1" fill="none" stroke="#4878D0" stroke-width="1.8" /><path d="M1 0.5 L7.5 8" fill="none" stroke="#111" stroke-width="2.1" stroke-linecap="round"/><circle cx="-0.8" cy="-2.2" r="3.6" fill="#98C4E4" stroke="#1C3C5C" stroke-width="1.4"/></g>
<g transform="translate(11,281)" ><path d="M-7 -7 L7 -8 L8 7 L-6 8Z" fill="#B09670" stroke="#4A3C28" stroke-width="1" /></g>
<g transform="translate(34,281)" ><path d="M-7 7 L8 2" fill="none" stroke="#9A9A94" stroke-width="1.2" /><path d="M-5 3 L5 -8 L8 -5.5 L-2.5 5.5Z" fill="#D81818" stroke="#8A1010" stroke-width="0.6" /><path d="M-5 3 L-2.5 5.5 L-7.5 7.5Z" fill="#E8C890" stroke="#5A4020" stroke-width="0.5" /><path d="M-7.5 7.5 l1.3 -2 l1 1z" fill="#222" stroke="none" stroke-width="1" /></g>
<g transform="translate(11,303)" ><circle cx="0" cy="0" r="7.5" fill="#B09670" stroke="#3A3020" stroke-width="1.1"/></g>
<g transform="translate(34,303)" ><path d="M-5 8 C-10 0 -4 -8 7 -6" fill="none" stroke="#111" stroke-width="2" /><path d="M-5.5 0 C-2 -3 3 -3.5 8 -2.5" fill="none" stroke="#444" stroke-width="0.8" /></g>
<g transform="translate(11,325)" ><path d="M-8 -6 L8 -7 L1 8Z" fill="#A89070" stroke="#4A3C28" stroke-width="0.9" /></g>
<g transform="translate(34,325)" ><path d="M-6 5 C-9 -2 -2 -8 5 -5 C9 -2 6 5 1 5 C-3 5 -4 0 0 -1 C3 -1 4 2 2 3 M-2 7 C2 9 7 6 8 2 M-7 -2 C-4 -6 3 -7 7 -3" fill="none" stroke="#222" stroke-width="1" /></g>
<g transform="translate(11,355)" ><path d="M-1.5 1.5 L-7.4 6.6 L-6 8.2 L0.5 3.5Z" fill="#E8C020" stroke="#4A3C08" stroke-width="0.7" /><path d="M-4 -5.2 C-4 -7 4 -8 6 -7 C7 -4 7 0 6.4 2 C4 3.5 0 4.3 -2 3.5 C-3.5 1 -4 -2 -4 -5.2Z" fill="#242420" stroke="#000" stroke-width="0.5" /><path d="M-4 -5 C-4 -2 -3.5 1 -2 3.5 C0 4.3 4 3.5 6.4 2" fill="none" stroke="#E8C020" stroke-width="1.3" /><ellipse cx="3" cy="-1.8" rx="2.6" ry="3" fill="#F8A010" stroke="#7A4A00" stroke-width="0.5" transform="rotate(-10 3 -1.8)"/><path d="M1 5 L8 4.5 L6 6.5 L0 6.5Z" fill="#B4B0A8" stroke="none" stroke-width="1" /></g>
<g transform="translate(34,355)" ><path d="M-6 -5 L5 -3 M-5 -7 L-6 -2 M6 -6 L5 0 M-2 0 L4 6 M-4 2 L-1 -1" fill="none" stroke="#222" stroke-width="1" /><text x="-4" y="4" font-size="6" fill="#222" font-family="Liberation Sans,sans-serif">3</text></g>
<g transform="translate(11,377)" ><path d="M-8 5 C-7 -4 0 -8 8 -7 L7 -3 L-4 7Z" fill="#F0C020" stroke="#7A5808" stroke-width="0.8" /><path d="M-4 3 C-3 -2 1 -4 5 -4" fill="none" stroke="#7A5808" stroke-width="0.8" /></g>
<g transform="translate(34,377)" ><path d="M-4 -7 H8 V0 H-4Z" fill="#fff" stroke="#000" stroke-width="1" /><text x="-3.2" y="-1.2" font-size="5.6" font-weight="bold" fill="#000" font-family="Liberation Sans,sans-serif">AbC</text><path d="M-4 -3 V8 M-5.5 6 L-4 8.5 L-2.5 6" fill="none" stroke="#000" stroke-width="0.9" /></g>
<g transform="translate(11,400)" ><path d="M0 1 L-7 5.5" fill="none" stroke="#18A018" stroke-width="2.6" /><path d="M-8.5 6.5 l4 -.3 l-1.8 -3z" fill="#18A018" stroke="none" stroke-width="1" /><path d="M0 1 L7 6" fill="none" stroke="#D81818" stroke-width="2.6" /><path d="M8.5 7 l-4 -.3 l1.8 -3z" fill="#D81818" stroke="none" stroke-width="1" /><path d="M0 1 L-6 -3 M0 1 L5 -2" fill="none" stroke="#C82020" stroke-width="1" /><path d="M0 7 V-6" fill="none" stroke="#1828D0" stroke-width="2.6" /><path d="M0 -9 l2.5 3.8 h-5z M0 9 l2 -3 h-4z" fill="#1828D0" stroke="none" stroke-width="1" /></g>
<g transform="translate(34,400)" ><text x="-7" y="7" font-size="19" font-weight="bold" fill="#8A7A5A" stroke="#3A3020" stroke-width=".6" font-family="Liberation Serif,serif">A</text></g>
<g transform="translate(11,430)" ><path d="M0 -7.5 L2.3 -4 L1 -1 L4 -2.3 L7.5 0 L4 2.3 L1 1 L2.3 4 L0 7.5 L-2.3 4 L-1 1 L-4 2.3 L-7.5 0 L-4 -2.3 L-1 -1 L-2.3 -4Z" fill="#D81C1C" stroke="#8A1010" stroke-width="0.5" transform="rotate(22)"/><circle cx="0" cy="0" r="1" fill="#F8D8D8" stroke="none" stroke-width="1"/></g>
<g transform="translate(34,430)" ><path d="M-7.5 2 L0 -0.5 L7.5 2 L0 5Z" fill="#C8B080" stroke="#3A2C14" stroke-width="0.6" /><path d="M-7.5 2 L0 5 V8.5 L-7.5 5Z" fill="#7A6238" stroke="#3A2C14" stroke-width="0.6" /><path d="M7.5 2 L0 5 V8.5 L7.5 5Z" fill="#4A3A1C" stroke="#3A2C14" stroke-width="0.6" /><path d="M0 -8.5 L3.2 -3.5 H1.3 V2 H-1.3 V-3.5 H-3.2Z" fill="#D82020" stroke="#8A0C0C" stroke-width="0.5" /></g>
<g transform="translate(11,453)" ><path d="M-6.3 0 A6.3 6.3 0 0 1 3.5 -5.3" fill="none" stroke="#CC1C1C" stroke-width="2.4" /><path d="M1.5 -8.5 L8 -2.5 L0.5 -1.5Z" fill="#CC1C1C" stroke="none" stroke-width="1" /><path d="M6.3 0.5 A6.3 6.3 0 0 1 -3.5 5.6" fill="none" stroke="#CC1C1C" stroke-width="2.4" /><path d="M-1.5 8.8 L-8 2.8 L-0.5 1.8Z" fill="#CC1C1C" stroke="none" stroke-width="1" /></g>
<g transform="translate(34,453)" ><path d="M-6 2 C-6 6 6 7 7 2 V5 C6 9 -6 8 -6 5Z" fill="#8A7250" stroke="#4A3C28" stroke-width="0.6" /><ellipse cx="0.5" cy="2" rx="6.5" ry="3" fill="#B09670" stroke="#4A3C28" stroke-width="0.6" transform="rotate(0 0.5 2)"/><path d="M-5 -6 C2 -7 6 -3 5 2" fill="none" stroke="#D82020" stroke-width="2" /><path d="M1 1 L5 4 L7 -1Z" fill="#D82020" stroke="none" stroke-width="1" /></g>
<g transform="translate(11,475)" ><path d="M-7 -6 L6 -6 L6 7 L-7 7Z" fill="#fff" stroke="#555" stroke-width="0.7" /><path d="M-1 0 L6 -6 L6 7 L-7 7Z" fill="#A89070" stroke="#4A3C28" stroke-width="0.6" /><path d="M-7 -6 L-1 0" fill="none" stroke="#D82020" stroke-width="1.6" /><path d="M-8 -7 l4 .5 l-3.5 3.5z M0 1 l-4 -.5 l3.5 -3.5z" fill="#D82020" stroke="none" stroke-width="1" /></g>
<g transform="translate(34,475)" ><path d="M-5 8 C-9 -2 -3 -8 7 -6.5" fill="none" stroke="#111" stroke-width="1.5" /><path d="M0 3 C-1.5 -1.5 1 -3.8 4.5 -3.3" fill="none" stroke="#111" stroke-width="1.3" /><path d="M-5 -8 L-2 -6.3 L1 -7.5 L0.3 -4.8 L3 -3 L-0.3 -2.8 L-1.8 0 L-2.8 -3.2 L-6 -3.8 L-3.8 -5.8Z" fill="#D01C24" stroke="#7A0C0C" stroke-width="0.4" /></g>
<g transform="translate(11,506)" ><path d="M0 -8 L2 -4 L1.5 2 L3 6 H-3 L-1.5 2 L-2 -4Z" fill="#fff" stroke="#000" stroke-width="1" /><circle cx="0" cy="-6" r="1.6" fill="#000" stroke="none" stroke-width="1"/><path d="M-6 7 L6 3 M-6 3 L6 7" fill="none" stroke="#D82020" stroke-width="1.1" /></g>
<g transform="translate(34,506)" ><ellipse cx="-3.5" cy="-3.5" rx="2.6" ry="4.2" fill="#000" stroke="none" stroke-width="1" transform="rotate(-10 -3.5 -3.5)"/><ellipse cx="-4" cy="3.5" rx="2" ry="2" fill="#000" stroke="none" stroke-width="1" transform="rotate(0 -4 3.5)"/><ellipse cx="3.5" cy="-0.5" rx="2.6" ry="4.2" fill="#000" stroke="none" stroke-width="1" transform="rotate(10 3.5 -0.5)"/><ellipse cx="4" cy="6.5" rx="2" ry="2" fill="#000" stroke="none" stroke-width="1" transform="rotate(0 4 6.5)"/></g>
<g transform="translate(11,527)" ><path d="M-8 1 C-4 -5 4 -5 8 1 C4 5 -4 5 -8 1Z" fill="#E8E8E8" stroke="#222" stroke-width="1" /><circle cx="0" cy="0.5" r="2.8" fill="#444" stroke="#000" stroke-width="0.6"/><path d="M-8 -2 C-4 -8 4 -8 8 -3" fill="none" stroke="#222" stroke-width="1.4" /></g>
<g transform="translate(58.5,130)" ><path d="M-8 -3 L-1 -6 L3 -4 L3 2 L-4 5 L-8 3Z" fill="#8A7452" stroke="#3A3020" stroke-width="0.7" /><path d="M-2 -1 L5 -4 L9 -2 L9 4 L2 7 L-2 5Z" fill="#A89070" stroke="#3A3020" stroke-width="0.7" /><path d="M-2 -1 L2 1 L9 -2 M2 1 V7" fill="none" stroke="#3A3020" stroke-width="0.6" /></g>
<g transform="translate(58.5,157)" ><path d="M-7 -6 H2 V3 H-7Z" fill="#ECECE8" stroke="#B0B0AC" stroke-width="0.8" /><path d="M-2 -2 H7 V7 H-2Z" fill="#F4F4F2" stroke="#B0B0AC" stroke-width="0.8" /><path d="M-7 3 L-5 5 H-2 M2 -6 L4 -4 V-2" fill="none" stroke="#B8B8B4" stroke-width="0.7" /></g>
<g transform="translate(81.5,157)" ><path d="M-7 -6 H2 V3 H-7Z" fill="#ECECE8" stroke="#B0B0AC" stroke-width="0.8" /><path d="M-2 -2 H7 V7 H-2Z" fill="#E0E0DC" stroke="#B0B0AC" stroke-width="0.8" /><path d="M-7 3 L-5 5 H-2 M2 -6 L4 -4 V-2" fill="none" stroke="#B8B8B4" stroke-width="0.7" /></g>
<g transform="translate(58.5,180)" ><path d="M-7 -6 H2 V3 H-7Z" fill="#ECECE8" stroke="#B0B0AC" stroke-width="0.8" /><path d="M-2 -2 H7 V7 H-2Z" fill="#F4F4F2" stroke="#B0B0AC" stroke-width="0.8" /><path d="M-7 3 L-5 5 H-2 M2 -6 L4 -4 V-2" fill="none" stroke="#B8B8B4" stroke-width="0.7" /></g>
<g transform="translate(81.5,180)" ><path d="M-7 -6 H2 V3 H-7Z" fill="#ECECE8" stroke="#B0B0AC" stroke-width="0.8" /><path d="M-2 -2 H7 V7 H-2Z" fill="#E0E0DC" stroke="#B0B0AC" stroke-width="0.8" /><path d="M-7 3 L-5 5 H-2 M2 -6 L4 -4 V-2" fill="none" stroke="#B8B8B4" stroke-width="0.7" /></g>
<g transform="translate(58.5,202)" ><path d="M-7 -6 H2 V3 H-7Z" fill="#ECECE8" stroke="#B0B0AC" stroke-width="0.8" /><path d="M-2 -2 H7 V7 H-2Z" fill="#F4F4F2" stroke="#B0B0AC" stroke-width="0.8" /><path d="M-7 3 L-5 5 H-2 M2 -6 L4 -4 V-2" fill="none" stroke="#B8B8B4" stroke-width="0.7" /></g>
<g transform="translate(58.5,439)" ><circle cx="0" cy="0" r="6.5" fill="#fff" stroke="#000" stroke-width="1"/><path d="M-9 0 H-5 M5 0 H9 M0 -9 L-2.5 -6 H2.5Z M0 9 L-2.5 6 H2.5Z" fill="#000" stroke="#000" stroke-width="0.8" /><path d="M-4 0 H4" fill="none" stroke="#000" stroke-width="0.8" /><text x="-3" y="4.5" font-size="5" fill="#000" font-family="Liberation Sans,sans-serif">▭</text></g>
<g transform="translate(81.5,439)" ><path d="M-6 -7 L3 -5 L3 7 L-6 5Z" fill="#F8D8D8" stroke="#D04050" stroke-width="1.2" /><path d="M-3 -5 L6 -7 L6 4 L3 5" fill="none" stroke="#D06070" stroke-width="1" /></g>
<g transform="translate(58.5,461)" ><path d="M-7 -2 L0 -8 L5 -3 L5 7 L-7 7Z" fill="#F4D0D0" stroke="#D04858" stroke-width="1.2" /><path d="M-3 0 L2 -4 L7 0 L7 6 L5 7" fill="none" stroke="#888" stroke-width="0.8" /></g>
<g transform="translate(12.7,587.8)" ><circle cx="0" cy="0" r="8.8" fill="#F6EEDC" stroke="#8A6018" stroke-width="2.2"/><circle cx="0" cy="0" r="10.1" fill="none" stroke="#B89048" stroke-width="0.7"/><circle cx="0" cy="-2" r="3.6" fill="#F8B0A8" stroke="#D08078" stroke-width="0.6"/><path d="M-0.8 1 h1.6 v6 h-1.6z" fill="#E0A098" stroke="none" stroke-width="1" /></g>
<g transform="translate(40.7,587.8)" ><circle cx="0" cy="0" r="8.8" fill="#F6EEDC" stroke="#8A6018" stroke-width="2.2"/><circle cx="0" cy="0" r="10.1" fill="none" stroke="#B89048" stroke-width="0.7"/><circle cx="0" cy="-4.5" r="1.8" fill="#000" stroke="none" stroke-width="1"/><path d="M-2.6 -2 H2.6 V3 H1.5 V8 H-1.5 V3 H-2.6Z" fill="#000" stroke="none" stroke-width="1" /></g>
<g transform="translate(69,587.8)" ><circle cx="0" cy="0" r="8.8" fill="#F6EEDC" stroke="#8A6018" stroke-width="2.2"/><circle cx="0" cy="0" r="10.1" fill="none" stroke="#B89048" stroke-width="0.7"/><text x="-5.5" y="5.5" font-size="15" fill="#C8C0B0" font-family="Liberation Serif,serif">G</text></g>
<defs><radialGradient id="qg" cx="35%" cy="30%" r="75%"><stop offset="0" stop-color="#fff"/><stop offset=".55" stop-color="#E8F0FF"/><stop offset="1" stop-color="#2858C8"/></radialGradient></defs>
<g transform="translate(106.9,587.8)" ><circle cx="0" cy="0" r="9.2" fill="url(#qg)" stroke="#1C4470" stroke-width="1.8"/><text x="-4.6" y="5.6" font-size="15.5" font-weight="bold" fill="#000" font-family="Liberation Sans,sans-serif">?</text></g>
<g transform="translate(10,9)" ><path d="M-6 -1 L0 -5 L4 -2 L4 4 L-2 7 L-6 4Z" fill="#F0E8D8" stroke="#806040" stroke-width="0.6" /><path d="M-6 -1 L0 -5 L4 -2 L-2 1Z" fill="#C86030" stroke="none" stroke-width="1" /><path d="M-4 7 L6 -7 L8 -5 L-2 8Z" fill="#E02020" stroke="#801010" stroke-width="0.4" /></g>
</svg>
<div style="left:727px;top:306px;width:148px;height:262px;background:#D4D0C8"></div>
<div style="left:727px;top:306px;width:147px;height:1px;#D4D0C8"></div>
<div style="left:727px;top:306px;width:1px;height:261px;#D4D0C8"></div>
<div style="left:728px;top:307px;width:145px;height:1px;background:#fff"></div>
<div style="left:728px;top:307px;width:1px;height:259px;background:#fff"></div>
<div style="left:727px;top:567px;width:148px;height:1px;background:#404040"></div>
<div style="left:874px;top:306px;width:1px;height:262px;background:#404040"></div>
<div style="left:728px;top:566px;width:146px;height:1px;background:#808080"></div>
<div style="left:873px;top:307px;width:1px;height:260px;background:#808080"></div>
<span class="t" style="left:746.5px;top:311px;font-size:11px;letter-spacing:0.139px;color:#000;">Entity Info</span>
<span class="t" style="left:746.5px;top:328px;font-size:11px;letter-spacing:-0.350px;color:#000;">Erase</span>
<span class="t" style="left:746.5px;top:345px;font-size:11px;letter-spacing:-0.406px;color:#000;">Hide</span>
<span class="t" style="left:746.5px;top:362px;font-size:11px;letter-spacing:-0.562px;color:#000;">Lock</span>
<span class="t" style="left:746.5px;top:379px;font-size:11px;letter-spacing:-0.163px;color:#000;">Edit Group</span>
<span class="t" style="left:746.5px;top:396px;font-size:11px;letter-spacing:-0.183px;color:#000;">Explode</span>
<span class="t" style="left:746.5px;top:413px;font-size:11px;letter-spacing:-0.277px;color:#000;">Make Component</span>
<div style="left:731px;top:431px;width:140px;height:1px;background:#808080"></div>
<div style="left:731px;top:432px;width:140px;height:1px;background:#fff"></div>
<span class="t" style="left:747.5px;top:440px;font-size:11px;letter-spacing:-0.479px;color:#fff;">Unglue</span>
<span class="t" style="left:746.5px;top:439px;font-size:11px;letter-spacing:-0.479px;color:#808080;">Unglue</span>
<span class="t" style="left:746.5px;top:456px;font-size:11px;letter-spacing:-0.304px;color:#000;">Reset Scale</span>
<span class="t" style="left:747.5px;top:474px;font-size:11px;letter-spacing:-0.422px;color:#fff;">Reset Skew</span>
<span class="t" style="left:746.5px;top:473px;font-size:11px;letter-spacing:-0.422px;color:#808080;">Reset Skew</span>
<div style="left:731px;top:491px;width:140px;height:1px;background:#808080"></div>
<div style="left:731px;top:492px;width:140px;height:1px;background:#fff"></div>
<span class="t" style="left:746.5px;top:499px;font-size:11px;letter-spacing:-0.017px;color:#000;">Intersect Faces</span>
<div style="left:730px;top:514px;width:142px;height:17px;background:#0A246A"></div>
<span class="t" style="left:746.5px;top:516px;font-size:11px;letter-spacing:-0.183px;color:#fff;">Flip Along</span>
<span class="t" style="left:746.5px;top:533px;font-size:11px;letter-spacing:-0.164px;color:#000;">Soften/Smooth Edges</span>
<span class="t" style="left:746.5px;top:550px;font-size:11px;letter-spacing:-0.159px;color:#000;">Zoom Extents</span>
<div style="left:869px;top:511px;width:112px;height:57px;background:#D4D0C8"></div>
<div style="left:869px;top:511px;width:111px;height:1px;#D4D0C8"></div>
<div style="left:869px;top:511px;width:1px;height:56px;#D4D0C8"></div>
<div style="left:870px;top:512px;width:109px;height:1px;background:#fff"></div>
<div style="left:870px;top:512px;width:1px;height:54px;background:#fff"></div>
<div style="left:869px;top:567px;width:112px;height:1px;background:#404040"></div>
<div style="left:980px;top:511px;width:1px;height:57px;background:#404040"></div>
<div style="left:870px;top:566px;width:110px;height:1px;background:#808080"></div>
<div style="left:979px;top:512px;width:1px;height:55px;background:#808080"></div>
<div style="left:872px;top:514px;width:106px;height:17px;background:#0A246A"></div>
<span class="t" style="left:888.5px;top:516px;font-size:11px;letter-spacing:-0.358px;color:#fff;">Group's Red</span>
<span class="t" style="left:888.5px;top:533px;font-size:11px;letter-spacing:-0.334px;color:#000;">Group's Green</span>
<span class="t" style="left:888.5px;top:550px;font-size:11px;letter-spacing:-0.398px;color:#000;">Group's Blue</span>
<svg width="1024" height="600" viewBox="0 0 1024 600">
<path d="M862 501.5 l4 3.5 l-4 3.5z" fill="#000"/>
<path d="M862 518.5 l4 3.5 l-4 3.5z" fill="#fff"/>
</svg>
</div></body></html>
